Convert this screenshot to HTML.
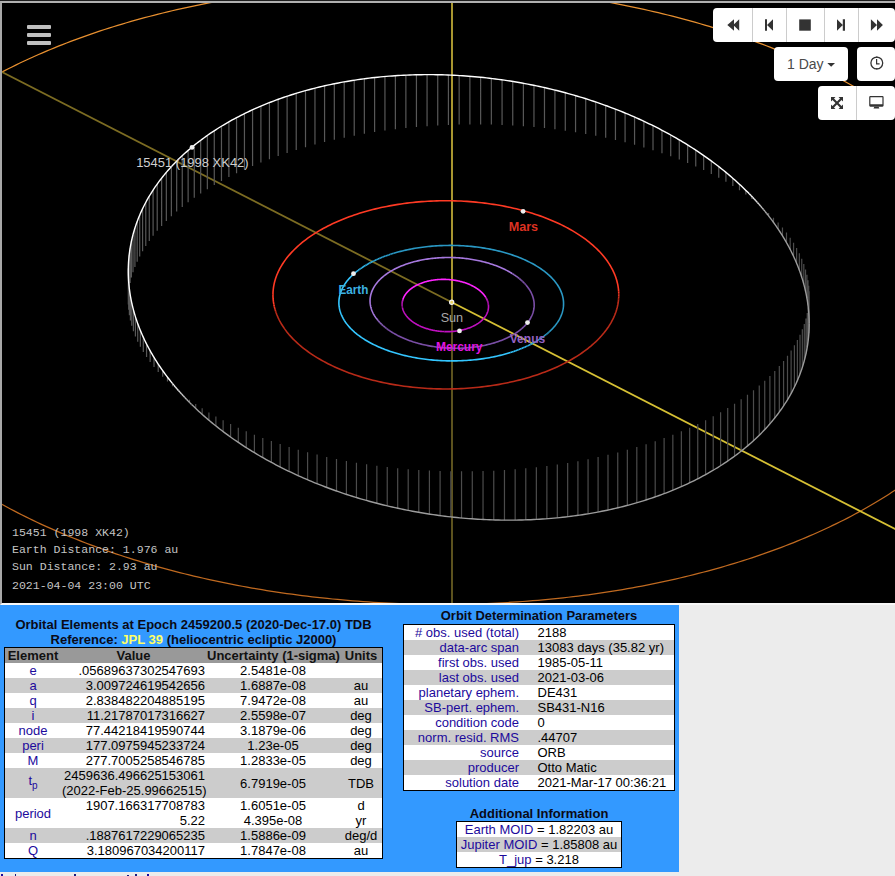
<!DOCTYPE html>
<html><head><meta charset="utf-8">
<style>
html,body{margin:0;padding:0;width:895px;height:876px;overflow:hidden;background:#ececec;font-family:"Liberation Sans",sans-serif;}
#topline{position:absolute;left:0;top:0;width:895px;height:1px;background:#1e1e1e;}
#frame{position:absolute;left:0;top:1px;width:900px;height:600px;border-style:solid;border-width:2px;border-color:#b0b0b0 #f4f4f4 #f8f8f8 #a8a8a8;background:#000;overflow:hidden;}
#panel{position:absolute;left:0;top:605px;width:679px;height:267px;background:#3399ff;}
.t{position:absolute;border:1px solid #000;border-collapse:separate;border-spacing:0;font-size:13px;}
.t td{padding:0 1px;height:15px;line-height:15px;white-space:nowrap;}
.hd td{background:#999;font-weight:bold;color:#111;text-align:center;}
.w td{background:#fff;}
.g td{background:#ccc;}
.nm{color:#1c0a9c;}
.ttl{position:absolute;font-size:13px;font-weight:bold;color:#0a0a16;text-align:center;line-height:15px;white-space:nowrap;}
.yl{color:#ffff66;}

.btn{position:absolute;background:#fff;border-radius:4px;}
.dv{position:absolute;top:0;bottom:0;width:1px;background:#ccc;}
#burger div{position:absolute;left:27px;width:24px;height:4px;background:#c0c0c0;border-radius:1px;}
#info{position:absolute;left:12px;font-family:"Liberation Mono",monospace;font-size:11.55px;color:#c4c4c4;white-space:pre;line-height:17px;}
#t2 td:first-child{padding-right:10px;}
#t2 td:last-child{padding-left:8.5px;}
#t1{table-layout:fixed;}
</style></head><body>
<div id="topline"></div>
<div id="frame"><svg width="900" height="600" viewBox="2 3 900 600" style="display:block">
<path d="M-165.76 282.53L-165.68 279.83" stroke="#db842b" stroke-width="1.25" fill="none"/>
<path d="M-165.68 279.83L-165.56 277.13" stroke="#dc852b" stroke-width="1.25" fill="none"/>
<path d="M-165.56 277.13L-165.39 274.43" stroke="#dd852c" stroke-width="1.25" fill="none"/>
<path d="M-165.39 274.43L-165.18 271.73" stroke="#de862c" stroke-width="1.25" fill="none"/>
<path d="M-165.18 271.73L-164.92 269.03" stroke="#df872c" stroke-width="1.25" fill="none"/>
<path d="M-164.92 269.03L-164.62 266.34" stroke="#e0882d" stroke-width="1.25" fill="none"/>
<path d="M-164.62 266.34L-164.27 263.64" stroke="#e0892d" stroke-width="1.25" fill="none"/>
<path d="M-164.27 263.64L-163.88 260.95" stroke="#e18a2d" stroke-width="1.25" fill="none"/>
<path d="M-163.88 260.95L-163.45 258.26" stroke="#e28a2e" stroke-width="1.25" fill="none"/>
<path d="M-163.45 258.26L-162.96 255.58" stroke="#e38b2e" stroke-width="1.25" fill="none"/>
<path d="M-162.96 255.58L-162.44 252.90" stroke="#e48c2e" stroke-width="1.25" fill="none"/>
<path d="M-162.44 252.90L-161.87 250.22" stroke="#e58d2f" stroke-width="1.25" fill="none"/>
<path d="M-161.87 250.22L-161.25 247.54" stroke="#e68e2f" stroke-width="1.25" fill="none"/>
<path d="M-161.25 247.54L-160.59 244.87" stroke="#e78f2f" stroke-width="1.25" fill="none"/>
<path d="M-160.59 244.87L-159.89 242.20L-159.14 239.54L-158.34 236.87L-157.50 234.22L-156.62 231.57L-155.69 228.92L-154.72 226.28L-153.70 223.64L-152.64 221.01L-151.54 218.38L-150.39 215.77L-149.19 213.15L-147.96 210.54L-146.68 207.94L-145.35 205.35L-143.99 202.76L-142.58 200.18L-141.12 197.61L-139.63 195.04L-138.09 192.48L-136.50 189.93L-134.88 187.39L-133.21 184.85L-131.50 182.32L-129.74 179.81L-127.95 177.30L-126.11 174.80L-124.23 172.30L-122.31 169.82L-120.34 167.35L-118.34 164.89L-116.29 162.43L-114.20 159.99L-112.07 157.56L-109.90 155.14L-107.69 152.72L-105.44 150.32L-103.15 147.93L-100.81 145.55L-98.44 143.19L-96.03 140.83L-93.57 138.49L-91.08 136.15L-88.55 133.83L-85.98 131.53L-83.37 129.23L-80.72 126.95L-78.04 124.68L-75.31 122.42L-72.55 120.18L-69.74 117.94L-66.91 115.73L-64.03 113.52L-61.11 111.33L-58.16 109.16L-55.17 106.99L-52.15 104.85L-49.09 102.71L-45.99 100.59L-42.86 98.49L-39.69 96.40L-36.48 94.33L-33.24 92.27L-29.97 90.22L-26.66 88.19L-23.32 86.18L-19.94 84.19L-16.53 82.21L-13.08 80.24L-9.60 78.29L-6.09 76.36L-2.54 74.45L1.04 72.55L4.65 70.67L8.29 68.80L11.96 66.96L15.67 65.13L19.41 63.31L23.17 61.52L26.97 59.74L30.80 57.98L34.66 56.24L38.55 54.52L42.47 52.81L46.42 51.13L50.39 49.46L54.40 47.81L58.43 46.18L62.49 44.57L66.58 42.98L70.70 41.40L74.84 39.85L79.01 38.31L83.21 36.80L87.43 35.30L91.68 33.83L95.96 32.37L100.25 30.94L104.58 29.52L108.93 28.12L113.30 26.75L117.70 25.39L122.12 24.06L126.56 22.74L131.03 21.45L135.51 20.18L140.03 18.93L144.56 17.70L149.11 16.49L153.69 15.30L158.28 14.13L162.90 12.99L167.53 11.86L172.19 10.76L176.87 9.68L181.56 8.62L186.27 7.58L191.00 6.56L195.75 5.57L200.52 4.60L205.30 3.65L210.10 2.72L214.92 1.81L219.75 0.93L224.60 0.07L229.47 -0.77L234.34 -1.59L239.24 -2.38L244.15 -3.15L249.07 -3.90L254.00 -4.63L258.95 -5.33L263.91 -6.01L268.88 -6.67L273.87 -7.30L278.87 -7.91L283.87 -8.50L288.89 -9.07L293.92 -9.61L298.96 -10.13L304.01 -10.62L309.07 -11.10L314.14 -11.54L319.21 -11.97L324.30 -12.37L329.39 -12.75L334.49 -13.11L339.59 -13.44L344.71 -13.75L349.83 -14.04L354.95 -14.30L360.08 -14.54L365.21 -14.75L370.35 -14.94L375.50 -15.11L380.65 -15.26L385.80 -15.38L390.95 -15.47L396.11 -15.55L401.27 -15.60L406.43 -15.62L411.59 -15.63L416.76 -15.61L421.92 -15.56L427.08 -15.49L432.25 -15.40L437.41 -15.29L442.58 -15.15L447.74 -14.99L452.90 -14.80L458.06 -14.59L463.21 -14.36L468.37 -14.10L473.52 -13.82L478.66 -13.52L483.81 -13.19L488.94 -12.84L494.08 -12.47L499.20 -12.07L504.33 -11.65L509.44 -11.21L514.55 -10.74L519.66 -10.25L524.75 -9.74L529.84 -9.20L534.92 -8.64L539.99 -8.06L545.06 -7.45L550.11 -6.82L555.16 -6.17L560.19 -5.50L565.22 -4.80L570.23 -4.08L575.24 -3.34L580.23 -2.57L585.21 -1.78L590.18 -0.97L595.13 -0.14L600.08 0.72L605.01 1.59L609.92 2.50L614.82 3.42L619.71 4.36L624.59 5.33L629.44 6.32L634.29 7.33L639.11 8.36L643.92 9.42L648.72 10.49L653.49 11.59L658.25 12.71L662.99 13.85L667.72 15.01L672.42 16.20L677.11 17.40L681.78 18.63L686.43 19.87L691.05 21.14L695.66 22.43L700.25 23.74L704.82 25.07L709.36 26.42L713.88 27.79L718.39 29.18L722.87 30.59L727.32 32.02L731.76 33.47L736.17 34.94L740.55 36.43L744.92 37.94L749.26 39.47L753.57 41.02L757.86 42.59L762.12 44.18L766.36 45.79L770.58 47.41L774.76 49.06L778.92 50.72L783.05 52.40L787.16 54.10L791.24 55.82L795.29 57.56L799.31 59.31L803.30 61.08L807.27 62.87L811.21 64.68L815.11 66.51L818.99 68.35L822.84 70.21L826.65 72.09L830.44 73.98L834.20 75.89L837.92 77.82L841.61 79.76L845.28 81.73L848.91 83.70L852.50 85.69L856.07 87.70L859.60 89.73L863.10 91.77L866.57 93.82L870.00 95.89L873.40 97.98L876.76 100.08L880.09 102.19L883.39 104.32L886.65 106.47L889.87 108.63L893.06 110.80L896.22 112.99L899.34 115.19L902.42 117.40L905.47 119.63L908.48 121.87L911.45 124.13L914.39 126.39L917.29 128.67L920.15 130.97L922.97 133.27L925.76 135.59L928.51 137.92L931.22 140.26L933.89 142.61L936.52 144.98L939.12 147.35L941.67 149.74L944.19 152.14L946.66 154.55L949.10 156.97L951.50 159.40L953.85 161.84L956.17 164.29L958.45 166.75L960.68 169.22L962.88 171.70L965.03 174.19L967.14 176.69L969.22 179.19L971.25 181.71L973.24 184.23L975.18 186.77L977.09 189.31L978.95 191.86L980.77 194.41L982.55 196.98L984.29 199.55L985.98 202.13L987.63 204.72L989.24 207.31L990.81 209.91L992.33 212.52L993.81 215.13L995.25 217.75L996.64 220.37L997.99 223.00L999.30 225.64L1000.56 228.28L1001.78 230.92L1002.95 233.57L1004.09 236.23L1005.17 238.89L1006.22 241.55L1007.21 244.22" stroke="#e89030" stroke-width="1.25" fill="none"/>
<path d="M1007.21 244.22L1008.17 246.89" stroke="#e78f30" stroke-width="1.25" fill="none"/>
<path d="M1008.17 246.89L1009.08 249.56" stroke="#e68e2f" stroke-width="1.25" fill="none"/>
<path d="M1009.08 249.56L1009.94 252.24" stroke="#e58d2f" stroke-width="1.25" fill="none"/>
<path d="M1009.94 252.24L1010.77 254.92" stroke="#e48c2e" stroke-width="1.25" fill="none"/>
<path d="M1010.77 254.92L1011.54 257.61" stroke="#e38c2e" stroke-width="1.25" fill="none"/>
<path d="M1011.54 257.61L1012.27 260.30" stroke="#e28b2e" stroke-width="1.25" fill="none"/>
<path d="M1012.27 260.30L1012.96 262.99" stroke="#e28a2d" stroke-width="1.25" fill="none"/>
<path d="M1012.96 262.99L1013.61 265.68" stroke="#e1892d" stroke-width="1.25" fill="none"/>
<path d="M1013.61 265.68L1014.20 268.37" stroke="#e0882d" stroke-width="1.25" fill="none"/>
<path d="M1014.20 268.37L1014.76 271.07" stroke="#df872c" stroke-width="1.25" fill="none"/>
<path d="M1014.76 271.07L1015.27 273.77" stroke="#de862c" stroke-width="1.25" fill="none"/>
<path d="M1015.27 273.77L1015.73 276.47" stroke="#dd862c" stroke-width="1.25" fill="none"/>
<path d="M1015.73 276.47L1016.15 279.17" stroke="#dc852b" stroke-width="1.25" fill="none"/>
<path d="M1016.15 279.17L1016.52 281.87" stroke="#db842b" stroke-width="1.25" fill="none"/>
<path d="M1016.52 281.87L1016.85 284.58" stroke="#da832b" stroke-width="1.25" fill="none"/>
<path d="M1016.85 284.58L1017.13 287.28" stroke="#d9822a" stroke-width="1.25" fill="none"/>
<path d="M1017.13 287.28L1017.37 289.99" stroke="#d9812a" stroke-width="1.25" fill="none"/>
<path d="M1017.37 289.99L1017.57 292.69" stroke="#d88029" stroke-width="1.25" fill="none"/>
<path d="M1017.57 292.69L1017.71 295.40" stroke="#d78029" stroke-width="1.25" fill="none"/>
<path d="M1017.71 295.40L1017.82 298.10" stroke="#d67f29" stroke-width="1.25" fill="none"/>
<path d="M1017.82 298.10L1017.88 300.81" stroke="#d57e28" stroke-width="1.25" fill="none"/>
<path d="M1017.88 300.81L1017.89 303.51" stroke="#d47d28" stroke-width="1.25" fill="none"/>
<path d="M1017.89 303.51L1017.86 306.21" stroke="#d37c28" stroke-width="1.25" fill="none"/>
<path d="M1017.86 306.21L1017.78 308.92" stroke="#d27b27" stroke-width="1.25" fill="none"/>
<path d="M1017.78 308.92L1017.66 311.62" stroke="#d17a27" stroke-width="1.25" fill="none"/>
<path d="M1017.66 311.62L1017.49 314.32" stroke="#d07a27" stroke-width="1.25" fill="none"/>
<path d="M1017.49 314.32L1017.28 317.02" stroke="#d07926" stroke-width="1.25" fill="none"/>
<path d="M1017.28 317.02L1017.03 319.72" stroke="#cf7826" stroke-width="1.25" fill="none"/>
<path d="M1017.03 319.72L1016.72 322.41" stroke="#ce7725" stroke-width="1.25" fill="none"/>
<path d="M1016.72 322.41L1016.38 325.10" stroke="#cd7625" stroke-width="1.25" fill="none"/>
<path d="M1016.38 325.10L1015.99 327.79" stroke="#cc7525" stroke-width="1.25" fill="none"/>
<path d="M1015.99 327.79L1015.55 330.48" stroke="#cb7424" stroke-width="1.25" fill="none"/>
<path d="M1015.55 330.48L1015.07 333.17" stroke="#ca7424" stroke-width="1.25" fill="none"/>
<path d="M1015.07 333.17L1014.54 335.85" stroke="#c97324" stroke-width="1.25" fill="none"/>
<path d="M1014.54 335.85L1013.97 338.53" stroke="#c87223" stroke-width="1.25" fill="none"/>
<path d="M1013.97 338.53L1013.35 341.21" stroke="#c77123" stroke-width="1.25" fill="none"/>
<path d="M1013.35 341.21L1012.69 343.88" stroke="#c77023" stroke-width="1.25" fill="none"/>
<path d="M1012.69 343.88L1011.99 346.55" stroke="#c66f22" stroke-width="1.25" fill="none"/>
<path d="M1011.99 346.55L1011.24 349.21" stroke="#c56f22" stroke-width="1.25" fill="none"/>
<path d="M1011.24 349.21L1010.44 351.87" stroke="#c46e22" stroke-width="1.25" fill="none"/>
<path d="M1010.44 351.87L1009.60 354.53" stroke="#c36d21" stroke-width="1.25" fill="none"/>
<path d="M1009.60 354.53L1008.72 357.18" stroke="#c26c21" stroke-width="1.25" fill="none"/>
<path d="M1008.72 357.18L1007.79 359.83" stroke="#c16b20" stroke-width="1.25" fill="none"/>
<path d="M1007.79 359.83L1006.82 362.47L1005.80 365.11L1004.74 367.74L1003.64 370.36L1002.49 372.98L1001.30 375.60L1000.06 378.20L998.78 380.80L997.46 383.40L996.09 385.99L994.68 388.57L993.23 391.14L991.73 393.71L990.19 396.27L988.60 398.82L986.98 401.36L985.31 403.90L983.60 406.42L981.84 408.94L980.05 411.45L978.21 413.95L976.33 416.44L974.41 418.92L972.44 421.40L970.44 423.86L968.39 426.31L966.30 428.76L964.17 431.19L962.00 433.61L959.79 436.02L957.54 438.42L955.25 440.81L952.91 443.19L950.54 445.56L948.13 447.92L945.68 450.26L943.18 452.59L940.65 454.91L938.08 457.22L935.47 459.52L932.82 461.80L930.14 464.07L927.41 466.33L924.65 468.57L921.85 470.80L919.01 473.02L916.13 475.22L913.22 477.41L910.26 479.59L907.28 481.75L904.25 483.90L901.19 486.04L898.09 488.15L894.96 490.26L891.79 492.35L888.59 494.42L885.35 496.48L882.07 498.52L878.76 500.55L875.42 502.56L872.04 504.56L868.63 506.54L865.18 508.51L861.70 510.45L858.19 512.39L854.65 514.30L851.07 516.20L847.46 518.08L843.81 519.94L840.14 521.79L836.43 523.62L832.70 525.43L828.93 527.23L825.13 529.01L821.30 530.76L817.44 532.51L813.55 534.23L809.63 535.93L805.69 537.62L801.71 539.29L797.70 540.94L793.67 542.57L789.61 544.18L785.52 545.77L781.40 547.34L777.26 548.90L773.09 550.43L768.89 551.95L764.67 553.44L760.42 554.92L756.15 556.38L751.85 557.81L747.52 559.23L743.17 560.62L738.80 562.00L734.41 563.35L729.99 564.69L725.54 566.00L721.08 567.30L716.59 568.57L712.08 569.82L707.54 571.05L702.99 572.26L698.42 573.45L693.82 574.62L689.20 575.76L684.57 576.89L679.91 577.99L675.24 579.07L670.54 580.13L665.83 581.17L661.10 582.18L656.35 583.18L651.58 584.15L646.80 585.10L642.00 586.03L637.18 586.93L632.35 587.82L627.50 588.68L622.64 589.52L617.76 590.33L612.86 591.13L607.96 591.90L603.04 592.65L598.10 593.37L593.15 594.08L588.19 594.76L583.22 595.41L578.23 596.05L573.24 596.66L568.23 597.25L563.21 597.81L558.18 598.35L553.14 598.87L548.09 599.37L543.03 599.84L537.96 600.29L532.89 600.72L527.81 601.12L522.71 601.50L517.61 601.86L512.51 602.19L507.40 602.50L502.28 602.78L497.15 603.05L492.02 603.28L486.89 603.50L481.75 603.69L476.60 603.86L471.46 604.00L466.30 604.12L461.15 604.22L455.99 604.29L450.83 604.34L445.67 604.37L440.51 604.37L435.35 604.35L430.18 604.31L425.02 604.24L419.85 604.15L414.69 604.03L409.53 603.90L404.36 603.73L399.20 603.55L394.04 603.34L388.89 603.11L383.74 602.85L378.59 602.57L373.44 602.27L368.30 601.94L363.16 601.59L358.03 601.22L352.90 600.82L347.78 600.40L342.66 599.95L337.55 599.49L332.45 599.00L327.35 598.48L322.26 597.95L317.18 597.39L312.11 596.80L307.04 596.20L301.99 595.57L296.94 594.92L291.91 594.24L286.88 593.55L281.87 592.83L276.87 592.08L271.87 591.32L266.89 590.53L261.92 589.72L256.97 588.89L252.03 588.03L247.10 587.15L242.18 586.25L237.28 585.33L232.39 584.38L227.52 583.42L222.66 582.43L217.82 581.42L212.99 580.39L208.18 579.33L203.39 578.25L198.61 577.16L193.85 576.04L189.11 574.90L184.38 573.74L179.68 572.55L174.99 571.35L170.32 570.12L165.68 568.88L161.05 567.61L156.44 566.32L151.85 565.01L147.29 563.68L142.74 562.33L138.22 560.96L133.72 559.57L129.24 558.16L124.78 556.73L120.35 555.28L115.93 553.80L111.55 552.31L107.18 550.80L102.85 549.27L98.53 547.72L94.24 546.16L89.98 544.57L85.74 542.96L81.53 541.34L77.34 539.69L73.18 538.03L69.05 536.35L64.94 534.65L60.86 532.93L56.81 531.19L52.79 529.44L48.80 527.66L44.83 525.87L40.90 524.06L36.99 522.24L33.11 520.40L29.26 518.54L25.45 516.66L21.66 514.76L17.91 512.85L14.18 510.93L10.49 508.98L6.83 507.02L3.20 505.05L-0.40 503.05L-3.97 501.04L-7.50 499.02L-11.00 496.98L-14.46 494.93L-17.90 492.85L-21.29 490.77L-24.66 488.67L-27.99 486.55L-31.28 484.42L-34.55 482.28L-37.77 480.12L-40.96 477.95L-44.12 475.76L-47.24 473.56L-50.32 471.34L-53.36 469.12L-56.37 466.88L-59.35 464.62L-62.28 462.35L-65.18 460.07L-68.05 457.78L-70.87 455.48L-73.66 453.16L-76.41 450.83L-79.12 448.49L-81.79 446.13L-84.42 443.77L-87.01 441.39L-89.57 439.01L-92.08 436.61L-94.56 434.20L-97.00 431.78L-99.39 429.35L-101.75 426.91L-104.07 424.46L-106.34 422.00L-108.58 419.53L-110.77 417.05L-112.93 414.56L-115.04 412.06L-117.11 409.55L-119.14 407.04L-121.13 404.51L-123.08 401.98L-124.99 399.44L-126.85 396.89L-128.67 394.33L-130.45 391.77L-132.19 389.20L-133.88 386.62L-135.53 384.03L-137.14 381.44L-138.71 378.84L-140.23 376.23L-141.71 373.62L-143.15 371.00L-144.54 368.38L-145.89 365.75L-147.20 363.11L-148.46 360.47" stroke="#c06a20" stroke-width="1.25" fill="none"/>
<path d="M-148.46 360.47L-149.68 357.83" stroke="#c16b20" stroke-width="1.25" fill="none"/>
<path d="M-149.68 357.83L-150.85 355.18" stroke="#c26c21" stroke-width="1.25" fill="none"/>
<path d="M-150.85 355.18L-151.98 352.52" stroke="#c36d21" stroke-width="1.25" fill="none"/>
<path d="M-151.98 352.52L-153.07 349.86" stroke="#c46d21" stroke-width="1.25" fill="none"/>
<path d="M-153.07 349.86L-154.11 347.20" stroke="#c56e22" stroke-width="1.25" fill="none"/>
<path d="M-154.11 347.20L-155.11 344.53" stroke="#c56f22" stroke-width="1.25" fill="none"/>
<path d="M-155.11 344.53L-156.07 341.86" stroke="#c67023" stroke-width="1.25" fill="none"/>
<path d="M-156.07 341.86L-156.98 339.18" stroke="#c77123" stroke-width="1.25" fill="none"/>
<path d="M-156.98 339.18L-157.84 336.50" stroke="#c87223" stroke-width="1.25" fill="none"/>
<path d="M-157.84 336.50L-158.66 333.82" stroke="#c97324" stroke-width="1.25" fill="none"/>
<path d="M-158.66 333.82L-159.44 331.14" stroke="#ca7324" stroke-width="1.25" fill="none"/>
<path d="M-159.44 331.14L-160.17 328.45" stroke="#cb7424" stroke-width="1.25" fill="none"/>
<path d="M-160.17 328.45L-160.86 325.76" stroke="#cc7525" stroke-width="1.25" fill="none"/>
<path d="M-160.86 325.76L-161.50 323.07" stroke="#cd7625" stroke-width="1.25" fill="none"/>
<path d="M-161.50 323.07L-162.10 320.37" stroke="#cd7725" stroke-width="1.25" fill="none"/>
<path d="M-162.10 320.37L-162.65 317.68" stroke="#ce7826" stroke-width="1.25" fill="none"/>
<path d="M-162.65 317.68L-163.16 314.98" stroke="#cf7926" stroke-width="1.25" fill="none"/>
<path d="M-163.16 314.98L-163.63 312.28" stroke="#d07926" stroke-width="1.25" fill="none"/>
<path d="M-163.63 312.28L-164.05 309.58" stroke="#d17a27" stroke-width="1.25" fill="none"/>
<path d="M-164.05 309.58L-164.42 306.87" stroke="#d27b27" stroke-width="1.25" fill="none"/>
<path d="M-164.42 306.87L-164.75 304.17" stroke="#d37c28" stroke-width="1.25" fill="none"/>
<path d="M-164.75 304.17L-165.03 301.47" stroke="#d47d28" stroke-width="1.25" fill="none"/>
<path d="M-165.03 301.47L-165.27 298.76" stroke="#d57e28" stroke-width="1.25" fill="none"/>
<path d="M-165.27 298.76L-165.46 296.06L-165.61 293.35" stroke="#d67f29" stroke-width="1.25" fill="none"/>
<path d="M-165.61 293.35L-165.72 290.65" stroke="#d78029" stroke-width="1.25" fill="none"/>
<path d="M-165.72 290.65L-165.78 287.94" stroke="#d8812a" stroke-width="1.25" fill="none"/>
<path d="M-165.78 287.94L-165.79 285.24" stroke="#d9822a" stroke-width="1.25" fill="none"/>
<path d="M-165.79 285.24L-165.76 282.53" stroke="#da832a" stroke-width="1.25" fill="none"/>
<path d="M2 72.00L451.70 302.20" stroke="#7c6c22" stroke-width="1.8"/>
<path d="M451.70 302.20L905 534.06" stroke="#d6c034" stroke-width="1.8"/>
<path d="M452 3V302.20" stroke="#a89630" stroke-width="2"/>
<path d="M452 302.20V603" stroke="#5c521e" stroke-width="2"/>
<path d="M272.96 294.88L272.99 293.24L273.06 291.60L273.20 289.96L273.38 288.32L273.62 286.68L273.91 285.04L274.25 283.41L274.64 281.78L275.09 280.16L275.58 278.54L276.13 276.92L276.73 275.31L277.39 273.71L278.09 272.11L278.85 270.52L279.65 268.94L280.51 267.36L281.42 265.80L282.37 264.24L283.38 262.69L284.44 261.15L285.54 259.62L286.70 258.10L287.90 256.60L289.15 255.10L290.45 253.62L291.80 252.15L293.19 250.69L294.63 249.25L296.11 247.82L297.65 246.40L299.22 245.00L300.84 243.61L302.51 242.24L304.22 240.89L305.97 239.55L307.76 238.23L309.60 236.93L311.48 235.64L313.40 234.37L315.36 233.12L317.36 231.89L319.40 230.68L321.47 229.49L323.59 228.32L325.74 227.17L327.93 226.03L330.15 224.92L332.41 223.83L334.71 222.77L337.03 221.72L339.40 220.70L341.79 219.70L344.22 218.72L346.67 217.77L349.16 216.83L351.68 215.93L354.22 215.04L356.79 214.19L359.39 213.35L362.02 212.54L364.67 211.76L367.35 211.00L370.05 210.26L372.77 209.56L375.52 208.87L378.28 208.22L381.07 207.59L383.88 206.99L386.71 206.41L389.55 205.86L392.41 205.34L395.29 204.85L398.18 204.38L401.09 203.94L404.01 203.53L406.95 203.14L409.89 202.79L412.85 202.46L415.82 202.16L418.79 201.89L421.78 201.64L424.77 201.43L427.77 201.24L430.77 201.08L433.78 200.95L436.79 200.85L439.81 200.78L442.82 200.74L445.84 200.72L448.86 200.73L451.88 200.78L454.89 200.85L457.90 200.95L460.91 201.07L463.92 201.23L466.91 201.42L469.91 201.63L472.89 201.87L475.87 202.14L478.83 202.44L481.79 202.77L484.74 203.12L487.67 203.51L490.59 203.92L493.50 204.36L496.40 204.82L499.27 205.31L502.14 205.83L504.98 206.38L507.81 206.96L510.61 207.56L513.40 208.19L516.17 208.84L518.92 209.52L521.64 210.23L524.34 210.96L527.02 211.72L529.67 212.50L532.30 213.31L534.90 214.14L537.47 215.00L540.02 215.88L542.53 216.79L545.02 217.72L547.48 218.67L549.90 219.65L552.30 220.65L554.66 221.67L556.99 222.71L559.28 223.78L561.54 224.87L563.77 225.98L565.96 227.11L568.11 228.26L570.23 229.43L572.30 230.62L574.34 231.83L576.34 233.06L578.30 234.31L580.22 235.58L582.10 236.86L583.94 238.16L585.73 239.48L587.49 240.82L589.20 242.18L590.86 243.54L592.48 244.93L594.06 246.33L595.59 247.74L597.08 249.17L598.52 250.62L599.91 252.07L601.26 253.54L602.56 255.03L603.81 256.52L605.01 258.03L606.17 259.54L607.28 261.07L608.33 262.61L609.34 264.16L610.30 265.72L611.21 267.28L612.06 268.86L612.87 270.44L613.63 272.03L614.33 273.63L614.99 275.23L615.59 276.84L616.14 278.46L616.64 280.08L617.08 281.70L617.48 283.33L617.82 284.96L618.11 286.60L618.35 288.23L618.53 289.87L618.66 291.51" stroke="#ff3a24" stroke-width="1.6" fill="none"/>
<path d="M618.66 291.51L618.74 293.16" stroke="#f83823" stroke-width="1.6" fill="none"/>
<path d="M618.74 293.16L618.77 294.80" stroke="#e93520" stroke-width="1.6" fill="none"/>
<path d="M618.77 294.80L618.74 296.44" stroke="#db321e" stroke-width="1.6" fill="none"/>
<path d="M618.74 296.44L618.66 298.08" stroke="#cc2f1b" stroke-width="1.6" fill="none"/>
<path d="M618.66 298.08L618.53 299.73" stroke="#be2b19" stroke-width="1.6" fill="none"/>
<path d="M618.53 299.73L618.35 301.37L618.11 303.00L617.82 304.64L617.48 306.27L617.09 307.90L616.64 309.52L616.15 311.14L615.60 312.76L614.99 314.37L614.34 315.97L613.64 317.57L612.88 319.16L612.08 320.74L611.22 322.32L610.31 323.89L609.36 325.44L608.35 326.99L607.29 328.53L606.19 330.06L605.03 331.58L603.83 333.09L602.58 334.58L601.28 336.06L599.93 337.53L598.54 338.99L597.10 340.44L595.62 341.87L594.08 343.28L592.51 344.68L590.89 346.07L589.22 347.44L587.51 348.79L585.76 350.13L583.97 351.45L582.13 352.76L580.25 354.04L578.33 355.31L576.37 356.56L574.37 357.79L572.33 359.00L570.26 360.19L568.14 361.37L565.99 362.52L563.80 363.65L561.58 364.76L559.32 365.85L557.02 366.92L554.69 367.96L552.33 368.98L549.94 369.98L547.51 370.96L545.06 371.92L542.57 372.85L540.05 373.76L537.51 374.64L534.94 375.50L532.34 376.33L529.71 377.14L527.06 377.93L524.38 378.68L521.68 379.42L518.96 380.13L516.21 380.81L513.44 381.46L510.66 382.09L507.85 382.70L505.02 383.27L502.18 383.82L499.32 384.34L496.44 384.84L493.55 385.30L490.64 385.74L487.72 386.16L484.78 386.54L481.84 386.90L478.88 387.23L475.91 387.53L472.94 387.80L469.95 388.04L466.96 388.26L463.96 388.44L460.96 388.60L457.95 388.73L454.94 388.83L451.92 388.90L448.90 388.95L445.89 388.96L442.87 388.95L439.85 388.91L436.84 388.84L433.83 388.74L430.82 388.61L427.81 388.45L424.82 388.27L421.82 388.05L418.84 387.81L415.86 387.54L412.90 387.24L409.94 386.91L406.99 386.56L404.06 386.18L401.14 385.77L398.23 385.33L395.33 384.86L392.46 384.37L389.59 383.85L386.75 383.30L383.92 382.73L381.11 382.12L378.33 381.50L375.56 380.84L372.81 380.16L370.09 379.46L367.39 378.72L364.71 377.96L362.06 377.18L359.43 376.37L356.83 375.54L354.26 374.68L351.71 373.80L349.20 372.89L346.71 371.96L344.25 371.01L341.83 370.03L339.43 369.04L337.07 368.01L334.74 366.97L332.45 365.90L330.19 364.81L327.96 363.71L325.77 362.58L323.62 361.42L321.50 360.25L319.43 359.06L317.39 357.85L315.39 356.62L313.43 355.37L311.51 354.11L309.63 352.82L307.79 351.52L306.00 350.20L304.24 348.86L302.53 347.51L300.87 346.14L299.25 344.75L297.67 343.35L296.14 341.94L294.65 340.51L293.21 339.07L291.82 337.61L290.47 336.14L289.17 334.66L287.92 333.16L286.71 331.66L285.56 330.14L284.45 328.61L283.40 327.07L282.39 325.52L281.43 323.97L280.52 322.40L279.66 320.82L278.86 319.24L278.10 317.65L277.40 316.05L276.74 314.45L276.14 312.84" stroke="#b82a18" stroke-width="1.6" fill="none"/>
<path d="M276.14 312.84L275.59 311.23" stroke="#c32c1a" stroke-width="1.6" fill="none"/>
<path d="M275.59 311.23L275.09 309.61" stroke="#d1301c" stroke-width="1.6" fill="none"/>
<path d="M275.09 309.61L274.65 307.98" stroke="#e0331f" stroke-width="1.6" fill="none"/>
<path d="M274.65 307.98L274.25 306.35" stroke="#ee3621" stroke-width="1.6" fill="none"/>
<path d="M274.25 306.35L273.91 304.72" stroke="#fd3a24" stroke-width="1.6" fill="none"/>
<path d="M273.91 304.72L273.62 303.09L273.38 301.45L273.20 299.81L273.07 298.17L272.99 296.53L272.96 294.88" stroke="#ff3a24" stroke-width="1.6" fill="none"/>
<path d="M450.85 360.91L448.89 360.89L446.93 360.85L444.97 360.79L443.02 360.72L441.06 360.63L439.11 360.52L437.17 360.39L435.22 360.25L433.28 360.08L431.35 359.91L429.42 359.71L427.50 359.50L425.59 359.27L423.69 359.02L421.79 358.75L419.90 358.47L418.02 358.17L416.16 357.86L414.30 357.53L412.45 357.18L410.62 356.81L408.80 356.43L406.99 356.04L405.19 355.62L403.41 355.19L401.64 354.75L399.89 354.29L398.16 353.81L396.44 353.32L394.73 352.81L393.05 352.29L391.38 351.75L389.73 351.20L388.10 350.63L386.49 350.05L384.89 349.46L383.32 348.85L381.77 348.22L380.24 347.59L378.73 346.93L377.24 346.27L375.78 345.59L374.34 344.90L372.92 344.20L371.53 343.49L370.16 342.76L368.81 342.02L367.49 341.27L366.20 340.50L364.93 339.73L363.69 338.94L362.47 338.15L361.28 337.34L360.12 336.52L358.99 335.69L357.88 334.86L356.81 334.01L355.76 333.15L354.74 332.29L353.75 331.41L352.79 330.53L351.86 329.64L350.96 328.74L350.09 327.83L349.25 326.91L348.45 325.99L347.67 325.06L346.93 324.13L346.21 323.18L345.53 322.24L344.88 321.28L344.27 320.32L343.69 319.36L343.13 318.39L342.62 317.41L342.13 316.43L341.68 315.45L341.26 314.46L340.88 313.47L340.53 312.48L340.21 311.48L339.93 310.49L339.68 309.48L339.46 308.48L339.28 307.48L339.13 306.47L339.02 305.47L338.94 304.46L338.90 303.45L338.89 302.44L338.91 301.43L338.97 300.43L339.06 299.42L339.18 298.42L339.35 297.41L339.54 296.41L339.77 295.41L340.03 294.41L340.33 293.42L340.66 292.43L341.02 291.44L341.42 290.45L341.85 289.47L342.31 288.49L342.81 287.52L343.34 286.55L343.90 285.59L344.50 284.63L345.13 283.68L345.79 282.74L346.48 281.80L347.20 280.86L347.96 279.94L348.75 279.02L349.57 278.11L350.42 277.20L351.30 276.31L352.21 275.42L353.15 274.54L354.12 273.67L355.12 272.80" stroke="#34c6ff" stroke-width="1.6" fill="none"/>
<path d="M355.12 272.80L356.15 271.95" stroke="#34c5fe" stroke-width="1.6" fill="none"/>
<path d="M356.15 271.95L357.21 271.11" stroke="#33c3fc" stroke-width="1.6" fill="none"/>
<path d="M357.21 271.11L358.30 270.28" stroke="#33c2fa" stroke-width="1.6" fill="none"/>
<path d="M358.30 270.28L359.41 269.45" stroke="#33c0f8" stroke-width="1.6" fill="none"/>
<path d="M359.41 269.45L360.56 268.64" stroke="#32bff6" stroke-width="1.6" fill="none"/>
<path d="M360.56 268.64L361.73 267.84" stroke="#32bdf4" stroke-width="1.6" fill="none"/>
<path d="M361.73 267.84L362.93 267.04" stroke="#32bbf1" stroke-width="1.6" fill="none"/>
<path d="M362.93 267.04L364.15 266.26" stroke="#31baef" stroke-width="1.6" fill="none"/>
<path d="M364.15 266.26L365.41 265.49" stroke="#31b8ed" stroke-width="1.6" fill="none"/>
<path d="M365.41 265.49L366.68 264.74" stroke="#31b7eb" stroke-width="1.6" fill="none"/>
<path d="M366.68 264.74L367.99 263.99" stroke="#30b5e9" stroke-width="1.6" fill="none"/>
<path d="M367.99 263.99L369.32 263.25" stroke="#30b3e7" stroke-width="1.6" fill="none"/>
<path d="M369.32 263.25L370.67 262.53" stroke="#30b2e5" stroke-width="1.6" fill="none"/>
<path d="M370.67 262.53L372.05 261.82" stroke="#2fb0e3" stroke-width="1.6" fill="none"/>
<path d="M372.05 261.82L373.45 261.12" stroke="#2fafe1" stroke-width="1.6" fill="none"/>
<path d="M373.45 261.12L374.88 260.44" stroke="#2faddf" stroke-width="1.6" fill="none"/>
<path d="M374.88 260.44L376.33 259.77" stroke="#2eabdd" stroke-width="1.6" fill="none"/>
<path d="M376.33 259.77L377.80 259.11" stroke="#2eaadb" stroke-width="1.6" fill="none"/>
<path d="M377.80 259.11L379.30 258.47" stroke="#2ea8d9" stroke-width="1.6" fill="none"/>
<path d="M379.30 258.47L380.82 257.83" stroke="#2da7d7" stroke-width="1.6" fill="none"/>
<path d="M380.82 257.83L382.35 257.22" stroke="#2da5d5" stroke-width="1.6" fill="none"/>
<path d="M382.35 257.22L383.91 256.61" stroke="#2ca3d3" stroke-width="1.6" fill="none"/>
<path d="M383.91 256.61L385.49 256.02" stroke="#2ca2d1" stroke-width="1.6" fill="none"/>
<path d="M385.49 256.02L387.09 255.45" stroke="#2ca0cf" stroke-width="1.6" fill="none"/>
<path d="M387.09 255.45L388.71 254.89" stroke="#2b9fcc" stroke-width="1.6" fill="none"/>
<path d="M388.71 254.89L390.35 254.34" stroke="#2b9dca" stroke-width="1.6" fill="none"/>
<path d="M390.35 254.34L392.01 253.81" stroke="#2b9bc8" stroke-width="1.6" fill="none"/>
<path d="M392.01 253.81L393.68 253.30" stroke="#2a9ac6" stroke-width="1.6" fill="none"/>
<path d="M393.68 253.30L395.38 252.80L397.09 252.31L398.81 251.84L400.55 251.39L402.31 250.95L404.08 250.53L405.87 250.12L407.67 249.73L409.49 249.35L411.31 249.00L413.15 248.66L415.00 248.33L416.86 248.02L418.73 247.73L420.62 247.46L422.51 247.20L424.41 246.96L426.32 246.74L428.23 246.53L430.15 246.34L432.08 246.17L434.02 246.02L435.96 245.88L437.90 245.76L439.85 245.66L441.80 245.58L443.76 245.51L445.72 245.46L447.68 245.43L449.64 245.42L451.60 245.42L453.56 245.44L455.52 245.48L457.47 245.54L459.43 245.61L461.39 245.70L463.34 245.81L465.28 245.94L467.23 246.08L469.17 246.24L471.10 246.42L473.02 246.62L474.94 246.83L476.86 247.06L478.76 247.31L480.66 247.57L482.55 247.86L484.42 248.15L486.29 248.47L488.15 248.80L490.00 249.15L491.83 249.51L493.65 249.90L495.46 250.29L497.26 250.71L499.04 251.14L500.80 251.58L502.56 252.04L504.29 252.52L506.01 253.01L507.72 253.52L509.40 254.04L511.07 254.58L512.72 255.13L514.35 255.70L515.96 256.28L517.56 256.87L519.13 257.48L520.68 258.11L522.21 258.74L523.72 259.39L525.21 260.06L526.67 260.74L528.11 261.43L529.53 262.13L530.92 262.84L532.29 263.57L533.64 264.31L534.96 265.06L536.25 265.83L537.52 266.60L538.76 267.39L539.98 268.18L541.17 268.99L542.33 269.81L543.46 270.64L544.57 271.47L545.64 272.32L546.69 273.18L547.71 274.04L548.70 274.92L549.66 275.80L550.59 276.69L551.49 277.59L552.36 278.50L553.20 279.42L554.00 280.34L554.78 281.27L555.52 282.20L556.24 283.15L556.92 284.09L557.56 285.05L558.18 286.01L558.76 286.97L559.31 287.94L559.83 288.92L560.32 289.90L560.77 290.88L561.19 291.87L561.57 292.86L561.92 293.85L562.24 294.84L562.52 295.84L562.77 296.84L562.99 297.85L563.17 298.85L563.32 299.86L563.43 300.86L563.51 301.87L563.55 302.88L563.56 303.89L563.54 304.89L563.48 305.90L563.39 306.91L563.26 307.91L563.10 308.92L562.91 309.92L562.68 310.92L562.42 311.92L562.12 312.91L561.79 313.90L561.43 314.89L561.03 315.88L560.60 316.86L560.14 317.83L559.64 318.81L559.11 319.78L558.55 320.74L557.95 321.70L557.32 322.65L556.66 323.59L555.97 324.53L555.24 325.47L554.49 326.39L553.70 327.31L552.88 328.22L552.03 329.13L551.15 330.02L550.24 330.91L549.30 331.79" stroke="#2a98c4" stroke-width="1.6" fill="none"/>
<path d="M549.30 331.79L548.33 332.66" stroke="#2a99c5" stroke-width="1.6" fill="none"/>
<path d="M548.33 332.66L547.33 333.52" stroke="#2a9ac7" stroke-width="1.6" fill="none"/>
<path d="M547.33 333.52L546.30 334.38" stroke="#2b9cc9" stroke-width="1.6" fill="none"/>
<path d="M546.30 334.38L545.24 335.22" stroke="#2b9dcb" stroke-width="1.6" fill="none"/>
<path d="M545.24 335.22L544.15 336.05" stroke="#2c9fcd" stroke-width="1.6" fill="none"/>
<path d="M544.15 336.05L543.03 336.88" stroke="#2ca1cf" stroke-width="1.6" fill="none"/>
<path d="M543.03 336.88L541.89 337.69" stroke="#2ca2d1" stroke-width="1.6" fill="none"/>
<path d="M541.89 337.69L540.72 338.49" stroke="#2da4d3" stroke-width="1.6" fill="none"/>
<path d="M540.72 338.49L539.52 339.28" stroke="#2da5d5" stroke-width="1.6" fill="none"/>
<path d="M539.52 339.28L538.30 340.07" stroke="#2da7d7" stroke-width="1.6" fill="none"/>
<path d="M538.30 340.07L537.04 340.84" stroke="#2ea8d9" stroke-width="1.6" fill="none"/>
<path d="M537.04 340.84L535.76 341.59" stroke="#2eaadb" stroke-width="1.6" fill="none"/>
<path d="M535.76 341.59L534.46 342.34" stroke="#2eacdd" stroke-width="1.6" fill="none"/>
<path d="M534.46 342.34L533.13 343.07" stroke="#2faddf" stroke-width="1.6" fill="none"/>
<path d="M533.13 343.07L531.78 343.80" stroke="#2fafe1" stroke-width="1.6" fill="none"/>
<path d="M531.78 343.80L530.40 344.51" stroke="#2fb1e3" stroke-width="1.6" fill="none"/>
<path d="M530.40 344.51L529.00 345.20" stroke="#30b2e6" stroke-width="1.6" fill="none"/>
<path d="M529.00 345.20L527.57 345.89" stroke="#30b4e8" stroke-width="1.6" fill="none"/>
<path d="M527.57 345.89L526.12 346.56" stroke="#30b5ea" stroke-width="1.6" fill="none"/>
<path d="M526.12 346.56L524.65 347.22" stroke="#31b7ec" stroke-width="1.6" fill="none"/>
<path d="M524.65 347.22L523.15 347.86" stroke="#31b9ee" stroke-width="1.6" fill="none"/>
<path d="M523.15 347.86L521.63 348.49" stroke="#31baf0" stroke-width="1.6" fill="none"/>
<path d="M521.63 348.49L520.10 349.11" stroke="#32bcf2" stroke-width="1.6" fill="none"/>
<path d="M520.10 349.11L518.54 349.72" stroke="#32bdf4" stroke-width="1.6" fill="none"/>
<path d="M518.54 349.72L516.96 350.31" stroke="#32bff6" stroke-width="1.6" fill="none"/>
<path d="M516.96 350.31L515.36 350.88" stroke="#33c1f8" stroke-width="1.6" fill="none"/>
<path d="M515.36 350.88L513.74 351.44" stroke="#33c2fa" stroke-width="1.6" fill="none"/>
<path d="M513.74 351.44L512.10 351.99" stroke="#34c4fc" stroke-width="1.6" fill="none"/>
<path d="M512.10 351.99L510.44 352.52" stroke="#34c5fe" stroke-width="1.6" fill="none"/>
<path d="M510.44 352.52L508.77 353.03L507.07 353.53L505.36 354.02L503.64 354.49L501.89 354.94L500.14 355.38L498.36 355.80L496.58 356.21L494.78 356.60L492.96 356.97L491.14 357.33L489.30 357.67L487.45 358.00L485.59 358.31L483.71 358.60L481.83 358.87L479.94 359.13L478.04 359.37L476.13 359.59L474.22 359.80L472.30 359.99L470.37 360.16L468.43 360.31L466.49 360.45L464.55 360.57L462.60 360.67L460.65 360.75L458.69 360.82L456.73 360.87L454.77 360.90L452.81 360.91L450.85 360.91" stroke="#34c6ff" stroke-width="1.6" fill="none"/>
<path d="M370.06 299.94L370.10 299.15L370.17 298.36L370.26 297.57L370.38 296.78L370.52 296.00L370.68 295.22L370.87 294.44L371.09 293.66L371.33 292.89L371.59 292.12L371.88 291.35L372.20 290.58L372.53 289.82L372.90 289.07L373.28 288.32L373.69 287.57L374.13 286.82L374.58 286.09L375.07 285.35L375.57 284.63L376.10 283.90L376.65 283.19L377.22 282.48L377.82 281.77L378.44 281.07L379.08 280.38L379.75 279.70L380.43 279.02L381.14 278.35L381.87 277.69L382.62 277.03L383.40 276.39L384.19 275.75L385.00 275.12L385.84 274.49L386.69 273.88L387.57 273.28L388.46 272.68L389.38 272.09L390.31 271.52L391.26 270.95L392.23 270.39L393.22 269.84L394.23 269.31L395.25 268.78L396.29 268.26L397.35 267.76L398.43 267.26L399.52 266.77L400.62 266.30L401.75 265.84L402.89 265.39L404.04 264.95L405.21 264.52L406.39 264.10L407.59 263.69L408.80 263.30L410.02 262.92L411.26 262.55L412.50 262.19L413.76 261.85L415.04 261.52L416.32 261.20L417.61 260.89L418.92 260.60L420.23 260.32L421.56 260.05L422.89 259.80L424.24 259.55L425.59 259.33L426.95 259.11L428.31 258.91L429.69 258.72L431.07 258.55L432.46 258.38L433.85 258.24L435.25 258.10L436.65 257.98L438.06 257.87L439.48 257.78L440.89 257.70L442.31 257.64L443.74 257.58L445.16 257.55L446.59 257.52L448.02 257.51L449.45 257.51L450.88 257.53L452.32 257.56L453.75 257.61L455.18 257.67L456.61 257.74L458.04 257.82L459.47 257.92L460.89 258.04L462.32 258.16L463.74 258.31L465.15 258.46L466.56 258.63L467.97 258.81L469.38 259.00L470.77 259.21L472.17 259.43L473.55 259.67L474.93 259.92L476.30 260.18L477.67 260.45L479.02 260.74L480.37 261.04L481.71 261.35L483.05 261.68L484.37 262.01L485.68 262.36L486.98 262.73L488.27 263.10L489.55 263.49L490.82 263.89L492.08 264.30L493.32 264.72L494.56 265.15L495.78 265.60L496.98 266.06L498.17 266.53L499.35 267.01L500.52 267.50L501.67 268.00L502.80 268.51L503.92 269.03L505.02 269.56L506.11 270.11L507.18 270.66L508.23 271.22L509.27 271.79L510.29 272.37L511.29 272.97L512.27 273.57" stroke="#a678de" stroke-width="1.6" fill="none"/>
<path d="M512.27 273.57L513.24 274.17" stroke="#a476db" stroke-width="1.6" fill="none"/>
<path d="M513.24 274.17L514.19 274.79" stroke="#a173d8" stroke-width="1.6" fill="none"/>
<path d="M514.19 274.79L515.11 275.42" stroke="#9f71d5" stroke-width="1.6" fill="none"/>
<path d="M515.11 275.42L516.02 276.05" stroke="#9c6fd2" stroke-width="1.6" fill="none"/>
<path d="M516.02 276.05L516.91 276.70" stroke="#9a6ccf" stroke-width="1.6" fill="none"/>
<path d="M516.91 276.70L517.78 277.35" stroke="#976acb" stroke-width="1.6" fill="none"/>
<path d="M517.78 277.35L518.63 278.00" stroke="#9568c8" stroke-width="1.6" fill="none"/>
<path d="M518.63 278.00L519.46 278.67" stroke="#9365c5" stroke-width="1.6" fill="none"/>
<path d="M519.46 278.67L520.27 279.34" stroke="#9063c2" stroke-width="1.6" fill="none"/>
<path d="M520.27 279.34L521.05 280.03" stroke="#8e61bf" stroke-width="1.6" fill="none"/>
<path d="M521.05 280.03L521.82 280.71" stroke="#8b5ebc" stroke-width="1.6" fill="none"/>
<path d="M521.82 280.71L522.57 281.41" stroke="#895cb9" stroke-width="1.6" fill="none"/>
<path d="M522.57 281.41L523.29 282.11" stroke="#865ab5" stroke-width="1.6" fill="none"/>
<path d="M523.29 282.11L523.99 282.82" stroke="#8457b2" stroke-width="1.6" fill="none"/>
<path d="M523.99 282.82L524.67 283.53" stroke="#8155af" stroke-width="1.6" fill="none"/>
<path d="M524.67 283.53L525.33 284.25" stroke="#7f53ac" stroke-width="1.6" fill="none"/>
<path d="M525.33 284.25L525.97 284.97" stroke="#7c50a9" stroke-width="1.6" fill="none"/>
<path d="M525.97 284.97L526.58 285.70L527.17 286.44L527.74 287.18L528.28 287.93L528.80 288.68L529.30 289.43L529.78 290.19L530.23 290.95L530.66 291.72L531.06 292.49L531.44 293.26L531.79 294.03L532.13 294.81L532.43 295.59L532.71 296.38L532.97 297.16L533.20 297.95L533.41 298.74L533.60 299.52L533.76 300.32L533.89 301.11L534.00 301.90L534.08 302.69L534.14 303.48L534.17 304.27L534.18 305.07L534.17 305.86L534.13 306.65L534.06 307.44L533.97 308.22L533.85 309.01L533.71 309.79L533.55 310.57L533.36 311.35L533.14 312.13L532.90 312.90L532.64 313.68L532.35 314.44L532.03 315.21L531.70 315.97L531.34 316.73L530.95 317.48L530.54 318.23L530.10 318.97L529.65 319.71L529.17 320.44L528.66 321.17L528.13 321.89L527.58 322.61L527.01 323.32L526.41 324.02L525.79 324.72L525.15 325.41L524.48 326.09L523.80 326.77L523.09 327.44L522.36 328.10L521.61 328.76L520.83 329.41L520.04 330.05L519.23 330.68L518.39 331.30L517.54 331.91L516.66 332.52L515.77 333.11L514.85 333.70L513.92 334.28L512.97 334.84L512.00 335.40L511.01 335.95L510.00 336.49L508.98 337.01L507.94 337.53L506.88 338.04L505.80 338.53L504.71 339.02L503.61 339.49L502.48 339.96L501.34 340.41L500.19 340.85L499.02 341.28L497.84 341.69L496.64 342.10L495.43 342.49L494.21 342.87L492.97 343.24L491.73 343.60L490.47 343.94L489.19 344.27L487.91 344.59L486.62 344.90L485.31 345.19L484.00 345.47L482.67 345.74L481.34 346.00L479.99 346.24L478.64 346.47L477.28 346.68L475.92 346.88L474.54 347.07L473.16 347.25L471.77 347.41L470.38 347.56L468.98 347.69L467.58 347.81L466.17 347.92L464.75 348.01L463.34 348.09L461.92 348.16L460.49 348.21L459.07 348.25L457.64 348.27L456.21 348.28L454.78 348.28L453.35 348.26L451.91 348.23L450.48 348.19L449.05 348.13L447.62 348.05L446.19 347.97L444.76 347.87L443.34 347.76L441.91 347.63L440.49 347.49L439.08 347.33L437.67 347.17L436.26 346.98L434.86 346.79L433.46 346.58L432.07 346.36L430.68 346.12L429.30 345.88L427.93 345.62L426.56 345.34L425.21 345.05L423.86 344.75L422.52 344.44L421.19 344.12L419.86 343.78L418.55 343.43L417.25 343.07L415.96 342.69L414.68 342.30L413.41 341.91L412.15 341.49L410.91 341.07L409.67 340.64L408.45 340.19L407.25 339.74L406.06 339.27L404.88 338.79L403.71 338.30L402.56 337.80L401.43 337.28L400.31 336.76L399.21 336.23L398.12 335.69L397.05 335.13L396.00 334.57L394.96 334.00L393.94 333.42L392.94 332.83L391.96 332.23L390.99 331.62L390.05 331.00" stroke="#7a4ea6" stroke-width="1.6" fill="none"/>
<path d="M390.05 331.00L389.12 330.37" stroke="#7d51aa" stroke-width="1.6" fill="none"/>
<path d="M389.12 330.37L388.21 329.74" stroke="#7f53ad" stroke-width="1.6" fill="none"/>
<path d="M388.21 329.74L387.32 329.10" stroke="#8255b0" stroke-width="1.6" fill="none"/>
<path d="M387.32 329.10L386.45 328.45" stroke="#8458b3" stroke-width="1.6" fill="none"/>
<path d="M386.45 328.45L385.60 327.79" stroke="#875ab6" stroke-width="1.6" fill="none"/>
<path d="M385.60 327.79L384.77 327.12" stroke="#895cb9" stroke-width="1.6" fill="none"/>
<path d="M384.77 327.12L383.97 326.45" stroke="#8c5fbc" stroke-width="1.6" fill="none"/>
<path d="M383.97 326.45L383.18 325.77" stroke="#8e61c0" stroke-width="1.6" fill="none"/>
<path d="M383.18 325.77L382.41 325.08" stroke="#9164c3" stroke-width="1.6" fill="none"/>
<path d="M382.41 325.08L381.67 324.39" stroke="#9366c6" stroke-width="1.6" fill="none"/>
<path d="M381.67 324.39L380.94 323.68" stroke="#9568c9" stroke-width="1.6" fill="none"/>
<path d="M380.94 323.68L380.24 322.98" stroke="#986bcc" stroke-width="1.6" fill="none"/>
<path d="M380.24 322.98L379.56 322.26" stroke="#9a6dcf" stroke-width="1.6" fill="none"/>
<path d="M379.56 322.26L378.90 321.54" stroke="#9d6fd2" stroke-width="1.6" fill="none"/>
<path d="M378.90 321.54L378.26 320.82" stroke="#9f72d5" stroke-width="1.6" fill="none"/>
<path d="M378.26 320.82L377.65 320.09" stroke="#a274d9" stroke-width="1.6" fill="none"/>
<path d="M377.65 320.09L377.06 319.35" stroke="#a476dc" stroke-width="1.6" fill="none"/>
<path d="M377.06 319.35L376.49 318.61L375.95 317.87L375.43 317.12L374.93 316.36L374.45 315.60L374.00 314.84L373.57 314.08L373.17 313.31L372.79 312.53L372.44 311.76L372.11 310.98L371.80 310.20L371.52 309.42L371.26 308.63L371.03 307.85L370.82 307.06L370.63 306.27L370.48 305.48L370.34 304.69L370.23 303.89L370.15 303.10L370.09 302.31L370.06 301.52L370.05 300.73L370.06 299.94" stroke="#a678de" stroke-width="1.6" fill="none"/>
<path d="M444.26 331.60L443.50 331.57L442.75 331.53L442.00 331.48L441.25 331.42L440.50 331.35L439.75 331.28L439.00 331.20L438.26 331.11L437.51 331.01L436.77 330.91L436.04 330.79L435.30 330.67L434.57 330.54L433.84 330.41L433.11 330.26L432.39 330.11L431.68 329.96L430.96 329.79L430.25 329.62L429.55 329.44L428.85 329.25L428.15 329.05L427.47 328.85L426.78 328.64L426.10 328.42L425.43 328.20L424.76 327.97L424.10 327.73L423.45 327.49L422.80 327.24L422.16 326.98L421.53 326.72L420.90 326.45L420.29 326.17L419.68 325.89L419.07 325.60L418.48 325.30L417.89 325.00L417.31 324.69L416.74 324.38L416.18 324.06L415.63 323.74L415.09 323.41L414.55 323.07L414.03 322.73L413.51 322.39L413.01 322.03L412.51 321.68L412.02 321.32L411.55 320.95L411.08 320.58L410.63 320.21L410.18 319.83L409.75 319.44L409.33 319.05L408.92 318.66L408.52 318.26L408.13 317.86L407.75 317.46L407.38 317.05L407.03 316.64L406.68 316.23L406.35 315.81L406.03 315.39L405.72 314.96L405.43 314.54L405.14 314.11L404.87 313.67L404.61 313.24L404.37 312.80L404.13 312.36L403.91 311.92L403.70 311.48L403.50 311.03L403.32 310.59L403.15 310.14L402.99 309.69L402.85 309.24L402.71 308.78L402.59 308.33L402.49 307.88L402.40 307.42" stroke="#c010c0" stroke-width="1.6" fill="none"/>
<path d="M402.40 307.42L402.31 306.97" stroke="#c411c4" stroke-width="1.6" fill="none"/>
<path d="M402.31 306.97L402.25 306.51" stroke="#c712c7" stroke-width="1.6" fill="none"/>
<path d="M402.25 306.51L402.19 306.05" stroke="#cb14cb" stroke-width="1.6" fill="none"/>
<path d="M402.19 306.05L402.15 305.60" stroke="#cf15cf" stroke-width="1.6" fill="none"/>
<path d="M402.15 305.60L402.13 305.14" stroke="#d216d2" stroke-width="1.6" fill="none"/>
<path d="M402.13 305.14L402.11 304.69" stroke="#d617d6" stroke-width="1.6" fill="none"/>
<path d="M402.11 304.69L402.11 304.23" stroke="#d918d9" stroke-width="1.6" fill="none"/>
<path d="M402.11 304.23L402.12 303.77" stroke="#dd19dd" stroke-width="1.6" fill="none"/>
<path d="M402.12 303.77L402.15 303.32" stroke="#e11ae1" stroke-width="1.6" fill="none"/>
<path d="M402.15 303.32L402.18 302.86" stroke="#e41be4" stroke-width="1.6" fill="none"/>
<path d="M402.18 302.86L402.24 302.41" stroke="#e81de8" stroke-width="1.6" fill="none"/>
<path d="M402.24 302.41L402.30 301.96" stroke="#eb1eeb" stroke-width="1.6" fill="none"/>
<path d="M402.30 301.96L402.38 301.51" stroke="#ef1fef" stroke-width="1.6" fill="none"/>
<path d="M402.38 301.51L402.47 301.06" stroke="#f220f2" stroke-width="1.6" fill="none"/>
<path d="M402.47 301.06L402.57 300.61" stroke="#f621f6" stroke-width="1.6" fill="none"/>
<path d="M402.57 300.61L402.69 300.16" stroke="#f922f9" stroke-width="1.6" fill="none"/>
<path d="M402.69 300.16L402.82 299.71" stroke="#fd23fd" stroke-width="1.6" fill="none"/>
<path d="M402.82 299.71L402.96 299.27L403.12 298.83L403.28 298.39L403.46 297.95L403.66 297.51L403.87 297.08L404.08 296.65L404.32 296.22L404.56 295.80L404.82 295.38L405.09 294.96L405.37 294.54L405.66 294.13L405.97 293.72L406.28 293.31L406.61 292.91L406.95 292.51L407.31 292.12L407.67 291.73L408.05 291.34L408.43 290.96L408.83 290.59L409.24 290.21L409.66 289.85L410.09 289.48L410.54 289.12L410.99 288.77L411.45 288.42L411.92 288.08L412.41 287.74L412.90 287.41L413.40 287.09L413.92 286.76L414.44 286.45L414.97 286.14L415.51 285.84L416.06 285.54L416.62 285.25L417.19 284.96L417.77 284.68L418.35 284.41L418.95 284.14L419.55 283.88L420.16 283.63L420.77 283.39L421.40 283.15L422.03 282.91L422.67 282.69L423.32 282.47L423.97 282.26L424.63 282.05L425.29 281.85L425.96 281.66L426.64 281.48L427.32 281.30L428.01 281.13L428.70 280.97L429.40 280.82L430.11 280.67L430.81 280.54L431.53 280.40L432.24 280.28L432.96 280.17L433.69 280.06L434.42 279.96L435.15 279.86L435.88 279.78L436.62 279.70L437.36 279.63L438.10 279.57L438.85 279.52L439.59 279.48L440.34 279.44L441.09 279.41L441.84 279.39L442.59 279.37L443.35 279.37L444.10 279.37L444.85 279.38L445.61 279.40L446.36 279.43L447.11 279.46L447.87 279.50L448.62 279.55L449.37 279.61L450.12 279.68L450.87 279.75L451.62 279.83L452.36 279.92L453.10 280.02L453.84 280.13L454.58 280.24L455.32 280.36L456.05 280.49L456.78 280.62L457.50 280.77L458.22 280.92L458.94 281.08L459.66 281.24L460.36 281.42L461.07 281.60L461.77 281.78L462.46 281.98L463.15 282.18L463.84 282.39L464.51 282.61L465.19 282.83L465.85 283.06L466.51 283.30L467.17 283.54L467.81 283.79L468.45 284.05L469.09 284.31L469.71 284.58L470.33 284.86L470.94 285.14L471.55 285.43L472.14 285.73L472.73 286.03L473.31 286.34L473.88 286.65L474.44 286.97L474.99 287.29L475.53 287.62L476.07 287.96L476.59 288.30L477.11 288.65L477.61 289.00L478.11 289.35L478.59 289.71L479.07 290.08L479.53 290.45L479.99 290.83L480.43 291.21L480.87 291.59L481.29 291.98L481.70 292.37L482.10 292.77L482.49 293.17L482.87 293.57L483.24 293.98L483.59 294.39L483.94 294.81L484.27 295.22L484.59 295.64L484.89 296.07L485.19 296.50L485.47 296.93L485.75 297.36" stroke="#ff24ff" stroke-width="1.6" fill="none"/>
<path d="M485.75 297.36L486.01 297.79" stroke="#fc23fc" stroke-width="1.6" fill="none"/>
<path d="M486.01 297.79L486.25 298.23" stroke="#f822f8" stroke-width="1.6" fill="none"/>
<path d="M486.25 298.23L486.49 298.67" stroke="#f521f5" stroke-width="1.6" fill="none"/>
<path d="M486.49 298.67L486.71 299.11" stroke="#f120f1" stroke-width="1.6" fill="none"/>
<path d="M486.71 299.11L486.92 299.55" stroke="#ee1fee" stroke-width="1.6" fill="none"/>
<path d="M486.92 299.55L487.11 300.00" stroke="#ea1dea" stroke-width="1.6" fill="none"/>
<path d="M487.11 300.00L487.30 300.45" stroke="#e71ce7" stroke-width="1.6" fill="none"/>
<path d="M487.30 300.45L487.47 300.89" stroke="#e31be3" stroke-width="1.6" fill="none"/>
<path d="M487.47 300.89L487.63 301.34" stroke="#e01ae0" stroke-width="1.6" fill="none"/>
<path d="M487.63 301.34L487.77 301.80" stroke="#dc19dc" stroke-width="1.6" fill="none"/>
<path d="M487.77 301.80L487.90 302.25" stroke="#d818d8" stroke-width="1.6" fill="none"/>
<path d="M487.90 302.25L488.02 302.70" stroke="#d517d5" stroke-width="1.6" fill="none"/>
<path d="M488.02 302.70L488.13 303.15" stroke="#d115d1" stroke-width="1.6" fill="none"/>
<path d="M488.13 303.15L488.22 303.61" stroke="#ce14ce" stroke-width="1.6" fill="none"/>
<path d="M488.22 303.61L488.30 304.06" stroke="#ca13ca" stroke-width="1.6" fill="none"/>
<path d="M488.30 304.06L488.37 304.52" stroke="#c612c6" stroke-width="1.6" fill="none"/>
<path d="M488.37 304.52L488.42 304.98" stroke="#c311c3" stroke-width="1.6" fill="none"/>
<path d="M488.42 304.98L488.46 305.43L488.49 305.89L488.51 306.35L488.51 306.80L488.50 307.26L488.47 307.71L488.43 308.17L488.38 308.62L488.32 309.07L488.24 309.52L488.15 309.97L488.05 310.42L487.93 310.87L487.80 311.32L487.66 311.76L487.50 312.20L487.33 312.64L487.15 313.08L486.96 313.52L486.75 313.95L486.53 314.38L486.30 314.81L486.06 315.23L485.80 315.66L485.53 316.08L485.25 316.49L484.96 316.90L484.65 317.31L484.33 317.72L484.01 318.12L483.66 318.52L483.31 318.91L482.95 319.30L482.57 319.69L482.18 320.07L481.79 320.45L481.38 320.82L480.96 321.19L480.52 321.55L480.08 321.91L479.63 322.26L479.17 322.61L478.69 322.95L478.21 323.29L477.72 323.62L477.21 323.95L476.70 324.27L476.18 324.58L475.64 324.89L475.10 325.19L474.55 325.49L473.99 325.78L473.43 326.07L472.85 326.35L472.26 326.62L471.67 326.89L471.07 327.15L470.46 327.40L469.84 327.65L469.22 327.89L468.59 328.12L467.95 328.34L467.30 328.56L466.65 328.78L465.99 328.98L465.33 329.18L464.66 329.37L463.98 329.55L463.30 329.73L462.61 329.90L461.91 330.06L461.22 330.21L460.51 330.36L459.80 330.50L459.09 330.63L458.37 330.75L457.65 330.87L456.93 330.97L456.20 331.07L455.47 331.17L454.74 331.25L454.00 331.33L453.26 331.40L452.52 331.46L451.77 331.51L451.03 331.56L450.28 331.59L449.53 331.62L448.78 331.64L448.02 331.66L447.27 331.66L446.52 331.66L445.76 331.65L445.01 331.63L444.26 331.60" stroke="#c010c0" stroke-width="1.6" fill="none"/>
<path d="M757.79 202.91V203.51M751.97 196.59V198.96M745.86 190.37V194.51M739.48 184.25V190.16M732.83 178.25V185.92M725.91 172.36V181.79M718.74 166.60V177.78M711.32 160.97V173.89M703.65 155.48V170.11M695.75 150.13V166.47M687.62 144.92V162.96M679.28 139.87V159.58M670.72 134.97V156.34M661.96 130.23V153.24M653.01 125.66V150.29M643.87 121.27V147.48M634.56 117.04V144.83M625.08 113.00V142.32M615.45 109.15V139.98M605.67 105.48V137.78M595.75 102.00V135.75M585.71 98.72V133.89M575.55 95.63V132.18M565.29 92.75V130.64M554.93 90.07V129.27M544.48 87.60V128.06M533.96 85.34V127.03M523.38 83.29V126.17M512.74 81.46V125.47M502.07 79.84V124.95M491.36 78.43V124.60M480.63 77.25V124.43M469.89 76.28V124.43M459.15 75.54V124.60M448.43 75.02V124.94M437.73 74.71V125.45M427.06 74.63V126.14M416.44 74.77V126.99M405.87 75.13V128.02M395.37 75.71V129.21M384.94 76.51V130.57M374.61 77.53V132.09M364.36 78.76V133.78M354.23 80.21V135.63M344.21 81.88V137.64M334.32 83.76V139.80M324.57 85.84V142.12M314.96 88.14V144.60M305.51 90.64V147.22M296.23 93.34V149.99M287.11 96.24V152.90M278.18 99.33V155.96M269.44 102.62V159.15M260.90 106.10V162.48M252.57 109.77V165.94M244.45 113.61V169.52M236.56 117.63V173.23M228.89 121.83V177.06M221.47 126.20V181.01M214.28 130.73V185.06M207.35 135.42V189.23M200.68 140.27V193.50M194.27 145.27V197.87M188.12 150.41V202.33M182.26 155.69V206.89M176.67 161.11V211.53M171.37 166.66V216.25M166.35 172.34V221.05M161.63 178.13V225.92M157.21 184.03V230.87M153.10 190.05V235.87M149.28 196.16V240.93M145.78 202.37V246.05M142.59 208.67V251.21M139.71 215.06V256.42M137.16 221.52V261.67M134.92 228.06V266.95M133.00 234.66V272.26M131.41 241.32V277.59M130.14 248.03V282.95M129.20 254.79V288.31M128.58 261.59V293.69M128.29 268.42V299.07M128.33 275.29V304.45M128.70 282.17V309.82M129.39 289.07V315.18M130.41 295.97V320.52M131.75 302.88V325.84M133.42 309.78V331.14M135.41 316.68V336.40M137.73 323.55V341.63M140.36 330.40V346.82M143.31 337.22V351.96M146.57 344.01V357.05M150.14 350.75V362.08M154.02 357.44V367.06M158.21 364.07V371.97M162.70 370.64V376.80M167.48 377.14V381.57M172.56 383.57V386.25M177.93 389.92V390.85" stroke="#585858" stroke-width="1.2" fill="none"/>
<path d="M809.15 326.28V296.64M809.11 319.30V291.16M808.72 312.29V285.70M808.00 305.27V280.25M806.94 298.25V274.81M805.54 291.22V269.40M803.80 284.20V264.01M801.74 277.19V258.66M799.34 270.20V253.35M796.61 263.24V248.08M793.56 256.31V242.86M790.18 249.42V237.70M786.48 242.58V232.60M782.47 235.79V227.56M778.14 229.07V222.59M773.50 222.41V217.69M768.56 215.83V212.88M763.32 209.33V208.15M183.57 396.18V395.36M189.50 402.35V399.78M195.70 408.41V404.10M202.17 414.38V408.33M208.90 420.23V412.44M215.89 425.96V416.45M223.12 431.57V420.34M230.60 437.06V424.11M238.31 442.41V427.77M246.25 447.62V431.30M254.41 452.69V434.70M262.79 457.60V437.97M271.37 462.37V441.10M280.15 466.97V444.09M289.12 471.41V446.94M298.27 475.68V449.65M307.59 479.78V452.21M317.07 483.70V454.62M326.71 487.44V456.88M336.49 491.00V458.98M346.41 494.36V460.92M356.45 497.53V462.70M366.61 500.51V464.32M376.87 503.29V465.78M387.23 505.86V467.07M397.68 508.23V468.19M408.20 510.39V469.15M418.78 512.34V469.93M429.42 514.08V470.55M440.10 515.60V470.99M450.81 516.90V471.27M461.54 517.99V471.37M472.29 518.86V471.29M483.03 519.51V471.05M493.76 519.94V470.63M504.47 520.14V470.04M515.15 520.12V469.27M525.78 519.89V468.34M536.36 519.42V467.23M546.88 518.74V465.96M557.31 517.83V464.52M567.66 516.71V462.91M577.92 515.36V461.13M588.06 513.80V459.19M598.09 512.02V457.09M607.99 510.02V454.84M617.74 507.82V452.42M627.35 505.40V449.85M636.81 502.77V447.12M646.09 499.94V444.25M655.20 496.90V441.23M664.11 493.66V438.07M672.84 490.23V434.76M681.36 486.61V431.32M689.66 482.79V427.75M697.74 478.79V424.04M705.60 474.61V420.22M713.21 470.25V416.26M720.59 465.72V412.19M727.70 461.02V408.01M734.56 456.16V403.72M741.15 451.14V399.32M747.47 445.97V394.82M753.51 440.65V390.22M759.26 435.19V385.53M764.73 429.58V380.76M769.89 423.85V375.90M774.76 418.00V370.97M779.32 412.02V365.96M783.57 405.93V360.89M787.50 399.73V355.75M791.12 393.43V350.56M794.41 387.04V345.31M797.38 380.55V340.02M800.02 373.99V334.69M802.33 367.35V329.32M804.31 360.64V323.91M805.95 353.86V318.49M807.26 347.03V313.04M808.23 340.16V307.58M808.86 333.24V302.11" stroke="#4c4c4c" stroke-width="1.2" fill="none"/>
<path d="M809.17 323.75L809.16 321.81L809.12 319.88L809.06 317.95L808.97 316.01L808.85 314.07L808.71 312.13L808.54 310.19L808.35 308.25L808.13 306.31L807.88 304.37L807.61 302.42L807.31 300.48L806.99 298.53L806.64 296.59L806.26 294.65L805.86 292.70L805.44 290.76L804.98 288.82L804.51 286.87L804.00 284.93L803.47 282.99L802.92 281.05L802.34 279.12L801.73 277.18L801.10 275.24L800.45 273.31L799.77 271.38L799.06 269.45L798.33 267.52L797.57 265.60L796.79 263.67L795.99 261.75L795.15 259.84L794.30 257.92L793.42 256.01L792.51 254.10L791.58 252.19L790.63 250.29L789.65 248.39L788.64 246.50L787.61 244.61L786.56 242.72L785.49 240.84L784.38 238.96L783.26 237.09L782.11 235.22L780.94 233.36L779.74 231.50L778.52 229.64L777.28 227.79L776.01 225.95L774.72 224.11L773.40 222.28L772.07 220.45L770.71 218.63L769.32 216.81L767.92 215.00" stroke="#9c9c9c" stroke-width="1.4" fill="none"/>
<path d="M767.92 215.00L766.49 213.20" stroke="#a5a5a5" stroke-width="1.4" fill="none"/>
<path d="M766.49 213.20L765.04 211.40" stroke="#adadad" stroke-width="1.4" fill="none"/>
<path d="M765.04 211.40L763.56 209.61" stroke="#b5b5b5" stroke-width="1.4" fill="none"/>
<path d="M763.56 209.61L762.07 207.83" stroke="#bdbdbd" stroke-width="1.4" fill="none"/>
<path d="M762.07 207.83L760.55 206.05" stroke="#c5c5c5" stroke-width="1.4" fill="none"/>
<path d="M760.55 206.05L759.01 204.28" stroke="#cdcdcd" stroke-width="1.4" fill="none"/>
<path d="M759.01 204.28L757.44 202.52" stroke="#d5d5d5" stroke-width="1.4" fill="none"/>
<path d="M757.44 202.52L755.86 200.77" stroke="#dddddd" stroke-width="1.4" fill="none"/>
<path d="M755.86 200.77L754.25 199.02" stroke="#e5e5e5" stroke-width="1.4" fill="none"/>
<path d="M754.25 199.02L752.62 197.28" stroke="#ededed" stroke-width="1.4" fill="none"/>
<path d="M752.62 197.28L750.97 195.55" stroke="#f5f5f5" stroke-width="1.4" fill="none"/>
<path d="M750.97 195.55L749.30 193.82" stroke="#fdfdfd" stroke-width="1.4" fill="none"/>
<path d="M749.30 193.82L747.60 192.10L745.89 190.39L744.15 188.69L742.40 187.00L740.62 185.32L738.82 183.64L737.00 181.97L735.16 180.31L733.30 178.67L731.42 177.03L729.52 175.39L727.60 173.77L725.66 172.16L723.71 170.56L721.73 168.96L719.73 167.38L717.71 165.81L715.68 164.24L713.62 162.69L711.55 161.15L709.46 159.61L707.35 158.09L705.22 156.58L703.07 155.08L700.91 153.59L698.73 152.11L696.53 150.64L694.31 149.18L692.08 147.74L689.83 146.30L687.56 144.88L685.28 143.47L682.98 142.07L680.66 140.68L678.33 139.31L675.98 137.94L673.61 136.59L671.23 135.25L668.84 133.93L666.42 132.61L664.00 131.31L661.56 130.02L659.10 128.74L656.63 127.48L654.15 126.23L651.65 124.99L649.13 123.77L646.61 122.56L644.07 121.36L641.51 120.17L638.95 119.00L636.37 117.85L633.78 116.70L631.17 115.57L628.56 114.46L625.93 113.35L623.28 112.26L620.63 111.19L617.97 110.13L615.29 109.08L612.60 108.05L609.91 107.04L607.20 106.03L604.48 105.05L601.75 104.07L599.01 103.11L596.26 102.17L593.50 101.24L590.73 100.33L587.95 99.43L585.16 98.54L582.37 97.68L579.56 96.82L576.75 95.98L573.93 95.16L571.10 94.35L568.26 93.56L565.42 92.79L562.56 92.02L559.70 91.28L556.84 90.55L553.96 89.84L551.09 89.14L548.20 88.46L545.31 87.79L542.41 87.14L539.51 86.50L536.60 85.89L533.68 85.28L530.76 84.70L527.84 84.13L524.91 83.58L521.98 83.04L519.04 82.52L516.10 82.01L513.16 81.52L510.21 81.05L507.26 80.60L504.31 80.16L501.35 79.74L498.39 79.33L495.43 78.94L492.47 78.57L489.51 78.21L486.54 77.87L483.57 77.55L480.60 77.25L477.63 76.96L474.66 76.69L471.69 76.43L468.72 76.19L465.75 75.97L462.78 75.77L459.81 75.58L456.84 75.41L453.87 75.25L450.90 75.12L447.94 75.00L444.97 74.89L442.01 74.81L439.05 74.74L436.09 74.69L433.14 74.65L430.18 74.63L427.23 74.63L424.28 74.65L421.34 74.68L418.40 74.73L415.46 74.79L412.53 74.88L409.60 74.98L406.68 75.09L403.76 75.23L400.85 75.38L397.94 75.55L395.04 75.73L392.14 75.93L389.25 76.15L386.36 76.39L383.48 76.64L380.61 76.91L377.74 77.20L374.88 77.50L372.03 77.82L369.18 78.15L366.35 78.51L363.52 78.88L360.70 79.26L357.88 79.67L355.08 80.08L352.28 80.52L349.49 80.97L346.72 81.44L343.95 81.93L341.19 82.43L338.44 82.95L335.70 83.48L332.97 84.03L330.25 84.60L327.54 85.18L324.84 85.78L322.15 86.40L319.48 87.03L316.81 87.68L314.16 88.34L311.52 89.02L308.89 89.71L306.27 90.43L303.67 91.15L301.08 91.89L298.50 92.65L295.93 93.43L293.38 94.22L290.84 95.02L288.31 95.84L285.80 96.68L283.30 97.53L280.81 98.39L278.34 99.27L275.89 100.17L273.45 101.08L271.02 102.01L268.61 102.95L266.21 103.91L263.83 104.88L261.47 105.86L259.12 106.86L256.79 107.88L254.47 108.91L252.17 109.95L249.88 111.01L247.62 112.08L245.37 113.16L243.13 114.26L240.92 115.38L238.72 116.51L236.53 117.65L234.37 118.80L232.22 119.97L230.10 121.15L227.99 122.35L225.89 123.56L223.82 124.78L221.77 126.02L219.73 127.26L217.71 128.53L215.72 129.80L213.74 131.09L211.78 132.39L209.84 133.70L207.92 135.02L206.02 136.36L204.14 137.71L202.28 139.07L200.44 140.45L198.62 141.83L196.83 143.23L195.05 144.64L193.29 146.06L191.56 147.49L189.84 148.93L188.15 150.39L186.47 151.85L184.82 153.33L183.20 154.82L181.59 156.32L180.00 157.83L178.44 159.35L176.90 160.88L175.38 162.42L173.88 163.97L172.41 165.54L170.96 167.11L169.53 168.69L168.12 170.28L166.74 171.88L165.38 173.49L164.04 175.11L162.73 176.74L161.44 178.38L160.17 180.03L158.92 181.69L157.70 183.35L156.51 185.03L155.33 186.71L154.19 188.40L153.06 190.10L151.96 191.81L150.88 193.52L149.83 195.25L148.80 196.98L147.80 198.72L146.82 200.46L145.86 202.22L144.93 203.98L144.03 205.75L143.15 207.52L142.29 209.31L141.46 211.09L140.65 212.89L139.87 214.69L139.11 216.50L138.38 218.31L137.68 220.13L137.00 221.96L136.34 223.79L135.71 225.63L135.10 227.47L134.53 229.32L133.97 231.18L133.44 233.03L132.94 234.90L132.46 236.77L132.01 238.64L131.58 240.52L131.18 242.40L130.81 244.28L130.46 246.17L130.14 248.07L129.84 249.97L129.57 251.87L129.32 253.77L129.10 255.68L128.91 257.59L128.74 259.50L128.59 261.42L128.48 263.34L128.39 265.26L128.32 267.19L128.28 269.12L128.27 271.05L128.28 272.98L128.32 274.91L128.39 276.84L128.48 278.78L128.59 280.72L128.74 282.66L128.91 284.60L129.10 286.54L129.32 288.48L129.57 290.42L129.84 292.37L130.14 294.31L130.46 296.26L130.81 298.20L131.18 300.14L131.58 302.09L132.01 304.03L132.46 305.97L132.94 307.92L133.44 309.86L133.97 311.80L134.53 313.74L135.10 315.67L135.71 317.61L136.34 319.55L137.00 321.48L137.68 323.41L138.38 325.34L139.11 327.27L139.87 329.19L140.65 331.12L141.46 333.04L142.29 334.96L143.15 336.87L144.03 338.78L144.93 340.69L145.86 342.60L146.82 344.50L147.80 346.40L148.80 348.29L149.83 350.18L150.88 352.07L151.96 353.95L153.06 355.83L154.19 357.70L155.33 359.57L156.51 361.43L157.70 363.29L158.92 365.15L160.17 367.00L161.44 368.84L162.73 370.68L164.04 372.51L165.38 374.34L166.74 376.16L168.12 377.98L169.53 379.79L170.96 381.59L172.41 383.39" stroke="#ffffff" stroke-width="1.4" fill="none"/>
<path d="M172.41 383.39L173.88 385.18" stroke="#f6f6f6" stroke-width="1.4" fill="none"/>
<path d="M173.88 385.18L175.38 386.96" stroke="#eeeeee" stroke-width="1.4" fill="none"/>
<path d="M175.38 386.96L176.90 388.74" stroke="#e6e6e6" stroke-width="1.4" fill="none"/>
<path d="M176.90 388.74L178.44 390.51" stroke="#dedede" stroke-width="1.4" fill="none"/>
<path d="M178.44 390.51L180.00 392.27" stroke="#d6d6d6" stroke-width="1.4" fill="none"/>
<path d="M180.00 392.27L181.59 394.02" stroke="#cecece" stroke-width="1.4" fill="none"/>
<path d="M181.59 394.02L183.20 395.77" stroke="#c6c6c6" stroke-width="1.4" fill="none"/>
<path d="M183.20 395.77L184.82 397.51" stroke="#bebebe" stroke-width="1.4" fill="none"/>
<path d="M184.82 397.51L186.47 399.24" stroke="#b6b6b6" stroke-width="1.4" fill="none"/>
<path d="M186.47 399.24L188.15 400.97" stroke="#aeaeae" stroke-width="1.4" fill="none"/>
<path d="M188.15 400.97L189.84 402.69" stroke="#a6a6a6" stroke-width="1.4" fill="none"/>
<path d="M189.84 402.69L191.56 404.40" stroke="#9e9e9e" stroke-width="1.4" fill="none"/>
<path d="M191.56 404.40L193.29 406.10L195.05 407.79L196.83 409.47L198.62 411.15L200.44 412.82L202.28 414.48L204.14 416.12L206.02 417.76L207.92 419.40L209.84 421.02L211.78 422.63L213.74 424.23L215.72 425.83L217.71 427.41L219.73 428.98L221.77 430.55L223.82 432.10L225.89 433.64L227.99 435.18L230.10 436.70L232.22 438.21L234.37 439.71L236.53 441.20L238.72 442.68L240.92 444.15L243.13 445.61L245.37 447.05L247.62 448.49L249.88 449.91L252.17 451.32L254.47 452.72L256.79 454.11L259.12 455.48L261.47 456.85L263.83 458.20L266.21 459.54L268.61 460.86L271.02 462.18L273.45 463.48L275.89 464.77L278.34 466.05L280.81 467.31L283.30 468.56L285.80 469.80L288.31 471.02L290.84 472.23L293.38 473.43L295.93 474.62L298.50 475.79L301.08 476.94L303.67 478.09L306.27 479.22L308.89 480.33L311.52 481.44L314.16 482.53L316.81 483.60L319.48 484.66L322.15 485.71L324.84 486.74L327.54 487.75L330.25 488.76L332.97 489.74L335.70 490.72L338.44 491.68L341.19 492.62L343.95 493.55L346.72 494.46L349.49 495.36L352.28 496.25L355.08 497.11L357.88 497.97L360.70 498.81L363.52 499.63L366.35 500.44L369.18 501.23L372.03 502.00L374.88 502.77L377.74 503.51L380.61 504.24L383.48 504.95L386.36 505.65L389.25 506.33L392.14 507.00L395.04 507.65L397.94 508.29L400.85 508.90L403.76 509.51L406.68 510.09L409.60 510.66L412.53 511.22L415.46 511.75L418.40 512.27L421.34 512.78L424.28 513.27L427.23 513.74L430.18 514.19L433.14 514.63L436.09 515.05L439.05 515.46L442.01 515.85L444.97 516.22L447.94 516.58L450.90 516.92L453.87 517.24L456.84 517.54L459.81 517.83L462.78 518.10L465.75 518.36L468.72 518.60L471.69 518.82L474.66 519.02L477.63 519.21L480.60 519.38L483.57 519.54L486.54 519.67L489.51 519.79L492.47 519.90L495.43 519.98L498.39 520.05L501.35 520.10L504.31 520.14L507.26 520.16L510.21 520.16L513.16 520.14L516.10 520.11L519.04 520.06L521.98 520.00L524.91 519.91L527.84 519.81L530.76 519.70L533.68 519.56L536.60 519.41L539.51 519.24L542.41 519.06L545.31 518.86L548.20 518.64L551.09 518.40L553.96 518.15L556.84 517.88L559.70 517.59L562.56 517.29L565.42 516.97L568.26 516.64L571.10 516.28L573.93 515.91L576.75 515.53L579.56 515.13L582.37 514.71L585.16 514.27L587.95 513.82L590.73 513.35L593.50 512.86L596.26 512.36L599.01 511.84L601.75 511.31L604.48 510.76L607.20 510.19L609.91 509.61L612.60 509.01L615.29 508.39L617.97 507.76L620.63 507.11L623.28 506.45L625.93 505.77L628.56 505.08L631.17 504.36L633.78 503.64L636.37 502.90L638.95 502.14L641.51 501.36L644.07 500.57L646.61 499.77L649.13 498.95L651.65 498.11L654.15 497.26L656.63 496.40L659.10 495.52L661.56 494.62L664.00 493.71L666.42 492.78L668.84 491.84L671.23 490.88L673.61 489.91L675.98 488.93L678.33 487.93L680.66 486.91L682.98 485.88L685.28 484.84L687.56 483.78L689.83 482.71L692.08 481.63L694.31 480.53L696.53 479.41L698.73 478.28L700.91 477.14L703.07 475.99L705.22 474.82L707.35 473.64L709.46 472.44L711.55 471.23L713.62 470.01L715.68 468.77L717.71 467.53L719.73 466.26L721.73 464.99L723.71 463.70L725.66 462.40L727.60 461.09L729.52 459.77L731.42 458.43L733.30 457.08L735.16 455.72L737.00 454.35L738.82 452.96L740.62 451.56L742.40 450.15L744.15 448.73L745.89 447.30L747.60 445.86L749.30 444.40L750.97 442.94L752.62 441.46L754.25 439.97L755.86 438.47L757.44 436.96L759.01 435.44L760.55 433.91L762.07 432.37L763.56 430.82L765.04 429.25L766.49 427.68L767.92 426.10L769.32 424.51L770.71 422.91L772.07 421.30L773.40 419.68L774.72 418.05L776.01 416.41L777.28 414.76L778.52 413.10L779.74 411.44L780.94 409.76L782.11 408.08L783.26 406.39L784.38 404.69L785.49 402.98L786.56 401.27L787.61 399.54L788.64 397.81L789.65 396.07L790.63 394.33L791.58 392.57L792.51 390.81L793.42 389.04L794.30 387.27L795.15 385.49L795.99 383.70L796.79 381.90L797.57 380.10L798.33 378.29L799.06 376.48L799.77 374.66L800.45 372.83L801.10 371.00L801.73 369.16L802.34 367.32L802.92 365.47L803.47 363.61L804.00 361.76L804.51 359.89L804.98 358.02L805.44 356.15L805.86 354.27L806.26 352.39L806.64 350.51L806.99 348.62L807.31 346.72L807.61 344.83L807.88 342.92L808.13 341.02L808.35 339.11L808.54 337.20L808.71 335.29L808.85 333.37L808.97 331.45L809.06 329.53L809.12 327.60L809.16 325.67L809.17 323.75" stroke="#9c9c9c" stroke-width="1.4" fill="none"/>
<circle cx="451.7" cy="302.3" r="2.1" fill="#e8d060" stroke="#f4f4f4" stroke-width="1.2"/>
<circle cx="192.0" cy="147.4" r="2.4" fill="#eeeeee"/>
<circle cx="523.1" cy="211.3" r="2.4" fill="#eeeeee"/>
<circle cx="353.5" cy="273.7" r="2.4" fill="#eeeeee"/>
<circle cx="527.5" cy="322.6" r="2.4" fill="#eeeeee"/>
<circle cx="459.5" cy="330.9" r="2.4" fill="#eeeeee"/>
<text x="192.4" y="166.7" text-anchor="middle" font-family="Liberation Sans" font-size="13" font-weight="normal" fill="#cfcfcf" textLength="112.5" lengthAdjust="spacingAndGlyphs">15451 (1998 XK42)</text>
<text x="523.4" y="230.9" text-anchor="middle" font-family="Liberation Sans" font-size="13" font-weight="bold" fill="#dc3222" textLength="29.5" lengthAdjust="spacingAndGlyphs">Mars</text>
<text x="353.4" y="293.8" text-anchor="middle" font-family="Liberation Sans" font-size="13" font-weight="bold" fill="#3cb2e2" textLength="30.0" lengthAdjust="spacingAndGlyphs">Earth</text>
<text x="527.5" y="343.1" text-anchor="middle" font-family="Liberation Sans" font-size="13" font-weight="bold" fill="#9462c4" textLength="35.5" lengthAdjust="spacingAndGlyphs">Venus</text>
<text x="459.2" y="350.5" text-anchor="middle" font-family="Liberation Sans" font-size="13" font-weight="bold" fill="#e214e2" textLength="46.5" lengthAdjust="spacingAndGlyphs">Mercury</text>
<text x="451.9" y="322.0" text-anchor="middle" font-family="Liberation Sans" font-size="13" font-weight="normal" fill="#a8a8a8" textLength="22.5" lengthAdjust="spacingAndGlyphs">Sun</text>
</svg></div>

<div id="burger"><div style="top:25px"></div><div style="top:33px"></div><div style="top:41px"></div></div>
<div id="info" style="top:523.6px">15451 (1998 XK42)
Earth Distance: 1.976 au
Sun Distance: 2.93 au</div>
<div id="info2" style="position:absolute;left:12px;top:576.6px;font-family:'Liberation Mono',monospace;font-size:11.55px;color:#c4c4c4;white-space:pre;line-height:17px;">2021-04-04 23:00 UTC</div>
<div class="btn" style="left:713px;top:8px;width:182px;height:33.5px;">
 <div class="dv" style="left:39px"></div><div class="dv" style="left:73px"></div><div class="dv" style="left:111px"></div><div class="dv" style="left:144.5px"></div>
</div>
<div class="btn" style="left:774px;top:47px;width:74px;height:33.8px;"></div>
<div class="btn" style="left:857px;top:47px;width:38px;height:33.8px;"></div>
<div class="btn" style="left:818px;top:85.7px;width:77px;height:34.3px;"><div class="dv" style="left:38px"></div></div>
<div style="position:absolute;left:787px;top:54.2px;font-size:14px;line-height:20px;color:#4a4a4a;">1 Day</div>
<svg style="position:absolute;left:0;top:0" width="895" height="130">
<g fill="#333">
<path d="M727.3 25L734 19.3V30.7Z M733.2 25L739.2 19.3V30.7Z"/>
<path d="M765 19.3H767V30.7H765Z M767 25L773 19.3V30.7Z"/>
<path d="M799.2 19.4H810.8V30.7H799.2Z"/>
<path d="M837 19.3L842.8 25L837 30.7Z M842.8 19.3H845V30.7H842.8Z"/>
<path d="M870.9 19.3L877 25L870.9 30.7Z M877 19.3L882.9 25L877 30.7Z"/>
<path d="M827.3 63H835L831.15 66.8Z"/>
</g>
<circle cx="876.8" cy="63" r="5.9" fill="none" stroke="#333" stroke-width="1.3"/>
<path d="M876.6 59V63.9H879.6M876.8 56.6V57.9M876.8 68.1V69.4" fill="none" stroke="#333" stroke-width="1.2"/>
<g fill="#333">
<path d="M831 97H835.5L834 98.5L837 101.5L840 98.5L838.5 97H843V101.5L841.5 100L838.5 103L841.5 106L843 104.5V109H838.5L840 107.5L837 104.5L834 107.5L835.5 109H831V104.5L832.5 106L835.5 103L832.5 100L831 101.5Z"/>
<path d="M869.2 97.2Q869.2 96.1 870.3 96.1H882.5Q883.6 96.1 883.6 97.2V105.6Q883.6 106.7 882.5 106.7H870.3Q869.2 106.7 869.2 105.6Z M870.4 97.2V104.2H882.4V97.2Z"/>
<path d="M874.3 106.7H878.6L879.4 108.6H873.5Z"/>
</g>
</svg>
<div style="position:absolute;left:1px;top:874px;width:2px;height:2px;background:#1c0a9c;"></div>
<div style="position:absolute;left:14.5px;top:874px;width:1.5px;height:2px;background:#1a1a80;"></div>
<div style="position:absolute;left:74px;top:874px;width:1.5px;height:2px;background:#1a1a80;"></div>
<div style="position:absolute;left:127px;top:875px;width:1.5px;height:1px;background:#1a1a80;"></div>
<div style="position:absolute;left:135px;top:874px;width:1.5px;height:2px;background:#1a1a80;"></div>
<div style="position:absolute;left:147px;top:874px;width:2px;height:2px;background:#1c0a9c;"></div>
<div id="panel"></div>
<div class="ttl" id="ttl1" style="left:4px;top:617px;width:379px;">Orbital Elements at Epoch 2459200.5 (2020-Dec-17.0) TDB<br>Reference: <span class="yl">JPL 39</span> (heliocentric ecliptic J2000)</div>
<table class="t" id="t1" style="left:4px;top:647px;width:379px;">
<colgroup><col style="width:56px"><col style="width:145px"><col style="width:134px"><col style="width:42px"></colgroup>
<tr class="hd"><td>Element</td><td>Value</td><td>Uncertainty (1-sigma)</td><td>Units</td></tr>
<tr class="w"><td class="nm" align="center">e</td><td align="right">.05689637302547693</td><td align="center">2.5481e-08</td><td align="center"></td></tr>
<tr class="g"><td class="nm" align="center">a</td><td align="right">3.009724619542656</td><td align="center">1.6887e-08</td><td align="center">au</td></tr>
<tr class="w"><td class="nm" align="center">q</td><td align="right">2.838482204885195</td><td align="center">7.9472e-08</td><td align="center">au</td></tr>
<tr class="g"><td class="nm" align="center">i</td><td align="right">11.21787017316627</td><td align="center">2.5598e-07</td><td align="center">deg</td></tr>
<tr class="w"><td class="nm" align="center">node</td><td align="right">77.44218419590744</td><td align="center">3.1879e-06</td><td align="center">deg</td></tr>
<tr class="g"><td class="nm" align="center">peri</td><td align="right">177.0975945233724</td><td align="center">1.23e-05</td><td align="center">deg</td></tr>
<tr class="w"><td class="nm" align="center">M</td><td align="right">277.7005258546785</td><td align="center">1.2833e-05</td><td align="center">deg</td></tr>
<tr class="g"><td class="nm" align="center" style="height:30px">t<sub style="font-size:10px">p</sub></td><td align="right">2459636.496625153061<br>(2022-Feb-25.99662515)</td><td align="center">6.7919e-05</td><td align="center">TDB</td></tr>
<tr class="w"><td class="nm" align="center" style="height:30px">period</td><td align="right">1907.166317708783<br>5.22</td><td align="center">1.6051e-05<br>4.395e-08</td><td align="center">d<br>yr</td></tr>
<tr class="g"><td class="nm" align="center">n</td><td align="right">.1887617229065235</td><td align="center">1.5886e-09</td><td align="center">deg/d</td></tr>
<tr class="w"><td class="nm" align="center">Q</td><td align="right">3.180967034200117</td><td align="center">1.7847e-08</td><td align="center">au</td></tr>
</table>
<div class="ttl" id="ttl2" style="left:403px;top:608px;width:272px;">Orbit Determination Parameters</div>
<table class="t" id="t2" style="left:403px;top:624px;width:272px;">
<tr class="w"><td class="nm" align="right" style="width:114px">#&nbsp;obs. used (total)</td><td>2188</td></tr>
<tr class="g"><td class="nm" align="right">data-arc span</td><td>13083 days (35.82 yr)</td></tr>
<tr class="w"><td class="nm" align="right">first obs. used</td><td>1985-05-11</td></tr>
<tr class="g"><td class="nm" align="right">last obs. used</td><td>2021-03-06</td></tr>
<tr class="w"><td class="nm" align="right">planetary ephem.</td><td>DE431</td></tr>
<tr class="g"><td class="nm" align="right">SB-pert. ephem.</td><td>SB431-N16</td></tr>
<tr class="w"><td class="nm" align="right">condition code</td><td>0</td></tr>
<tr class="g"><td class="nm" align="right">norm. resid. RMS</td><td>.44707</td></tr>
<tr class="w"><td class="nm" align="right">source</td><td>ORB</td></tr>
<tr class="g"><td class="nm" align="right">producer</td><td>Otto Matic</td></tr>
<tr class="w"><td class="nm" align="right">solution date</td><td>2021-Mar-17 00:36:21</td></tr>
</table>
<div class="ttl" id="ttl3" style="left:403px;top:806px;width:272px;">Additional Information</div>
<table class="t" id="t3" style="left:456px;top:821px;width:166px;">
<tr class="w"><td align="center"><span class="nm">Earth MOID</span> = 1.82203 au</td></tr>
<tr class="g"><td align="center"><span class="nm">Jupiter MOID</span> = 1.85808 au</td></tr>
<tr class="w"><td align="center"><span class="nm">T_jup</span> = 3.218</td></tr>
</table>
</body></html>
